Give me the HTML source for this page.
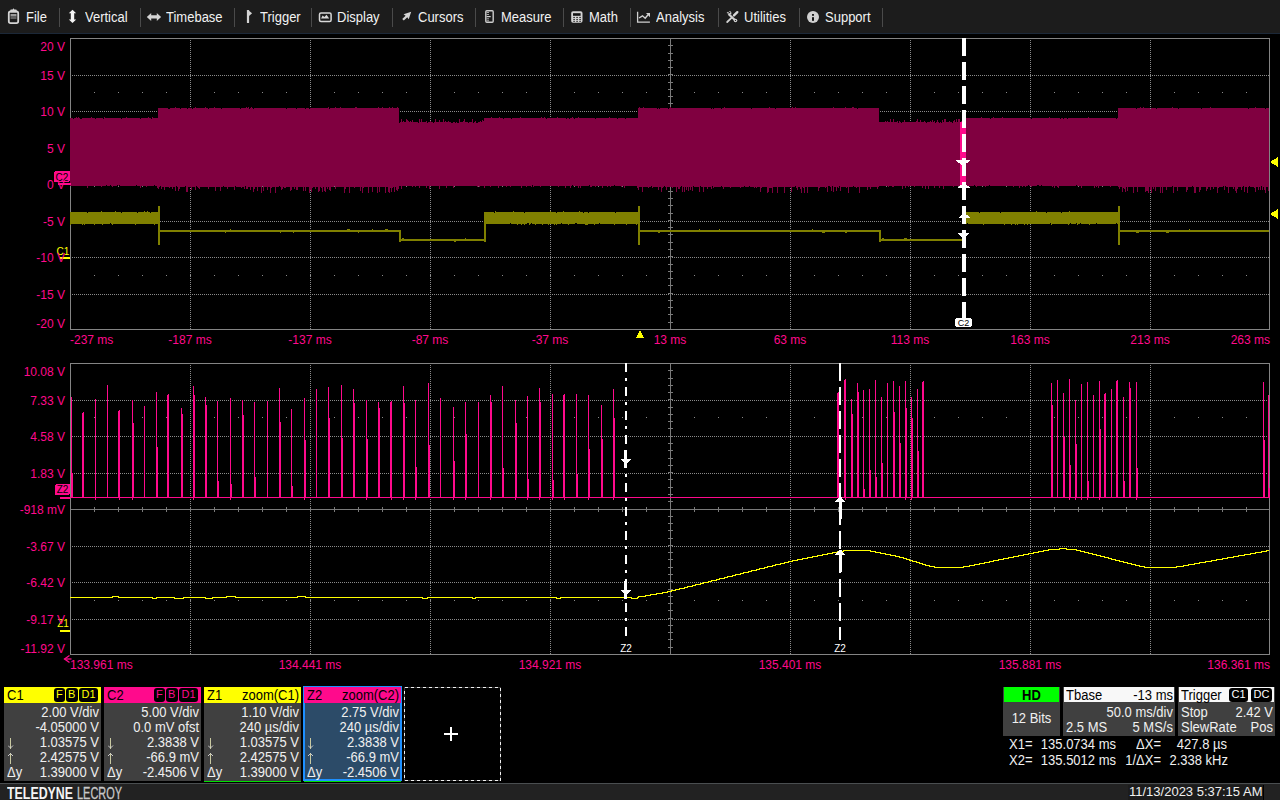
<!DOCTYPE html>
<html><head><meta charset="utf-8"><style>
*{margin:0;padding:0;box-sizing:border-box}
html,body{width:1280px;height:800px;background:#000;overflow:hidden;position:relative;font-family:"Liberation Sans",sans-serif}
#menu{position:absolute;left:0;top:0;width:1280px;height:34px;background:#1c1c1c;border-bottom:1px solid #1c2838}
.mt{position:absolute;top:10px;font-size:13px;line-height:16px;color:#f2f2f2;white-space:nowrap;transform:scaleY(1.11);transform-origin:0 12.5px}
.sep{position:absolute;top:8px;width:1px;height:19px;background:#4a4a4a}
.t{position:absolute;white-space:nowrap;line-height:normal}
.box{position:absolute;overflow:hidden}
.hdr{position:absolute;left:0;top:0;width:97px;height:16px}
.hl{position:absolute;left:3px;top:1px;font-size:13px;line-height:16px;color:#000;transform:scaleY(1.11);transform-origin:0 12.5px}
.hr{position:absolute;right:2px;top:1px;font-size:13px;line-height:16px;color:#000;transform:scaleY(1.11);transform-origin:0 12.5px}
.badge{position:absolute;top:1px;height:14px;background:#000;border-radius:3px;font-size:11px;line-height:13px;text-align:center}
.bl{position:absolute;left:3px;font-size:13px;line-height:15px;color:#f0f0f0;white-space:nowrap;transform:scaleY(1.11);transform-origin:0 12px}
.br{position:absolute;right:2px;font-size:13px;line-height:15px;color:#f0f0f0;white-space:nowrap;transform:scaleY(1.11);transform-origin:0 12px}
#footer{position:absolute;left:0;top:783px;width:1280px;height:17px;background:#222;border-top:1px solid #4a4e50}
#logo{position:absolute;left:7px;top:1.5px;font-size:16px;line-height:16px}
#logo2{position:absolute;left:77px;top:1.5px;font-size:16px;line-height:16px;color:#c8c8c8;transform:scaleX(0.684);transform-origin:left;-webkit-text-stroke:0.3px #c8c8c8}
</style></head><body>
<div id="menu">
<svg style="position:absolute;left:6px;top:7px" width="15" height="19" viewBox="6 7 15 19"><rect x="8.8" y="11.5" width="9.4" height="11.6" rx="1.8" fill="none" stroke="#d4d4d4" stroke-width="1.8"/><path d="M10.3,12.5 L10.3,10.2 Q10.3,9.5 11,9.5 L12.6,9.5 L13.5,8.2 L14.4,9.5 L16,9.5 Q16.7,9.5 16.7,10.2 L16.7,12.5 Z" fill="#d4d4d4"/><rect x="10.5" y="14" width="6" height="2.5" fill="#9a9a9a"/><rect x="10.5" y="16.5" width="6" height="2.5" fill="#606060"/></svg>
<div class="mt" style="left:26px">File</div>
<div class="sep" style="left:59px"></div>
<svg style="position:absolute;left:67px;top:8px" width="11" height="17" viewBox="67 8 11 17"><polygon points="72.5,9.8 76.2,13.2 74.2,13.2 74.2,19.6 76.2,19.6 72.5,23.1 68.8,19.6 70.8,19.6 70.8,13.2 68.8,13.2" fill="#f4f4f4"/></svg>
<div class="mt" style="left:85px">Vertical</div>
<div class="sep" style="left:140px"></div>
<svg style="position:absolute;left:145px;top:11px" width="18" height="12" viewBox="145 11 18 12"><polygon points="146.8,16.9 151.2,12.9 151.2,15.2 156.8,15.2 156.8,12.9 161.1,16.9 156.8,20.9 156.8,18.6 151.2,18.6 151.2,20.9" fill="#d4d4d4"/></svg>
<div class="mt" style="left:166px">Timebase</div>
<div class="sep" style="left:234px"></div>
<svg style="position:absolute;left:245px;top:8px" width="9" height="17" viewBox="245 8 9 17"><rect x="246.9" y="10" width="2.2" height="13" rx="0.5" fill="#d4d4d4"/><polygon points="248,10 252.1,13.2 249,16" fill="#d4d4d4"/></svg>
<div class="mt" style="left:260px">Trigger</div>
<div class="sep" style="left:311px"></div>
<svg style="position:absolute;left:317px;top:11px" width="17" height="13" viewBox="317 11 17 13"><rect x="319.5" y="13" width="11.6" height="8.4" rx="1.5" fill="none" stroke="#d8d8d8" stroke-width="1.5"/><polygon points="321,18.6 322.6,15.6 324.4,17 326.5,14.8 329.2,18.6" fill="#d8d8d8"/></svg>
<div class="mt" style="left:337px">Display</div>
<div class="sep" style="left:392px"></div>
<svg style="position:absolute;left:400px;top:10px" width="13" height="13" viewBox="400 10 13 13"><polygon points="411.2,11.8 408.7,19.2 407.3,17.3 403.8,20.6 402.2,19 405.6,15.8 403.6,14.3" fill="#d4d4d4"/></svg>
<div class="mt" style="left:418px">Cursors</div>
<div class="sep" style="left:475px"></div>
<svg style="position:absolute;left:484px;top:9px" width="11" height="15" viewBox="484 9 11 15"><rect x="485.8" y="10.7" width="7.4" height="11.5" rx="1" fill="none" stroke="#cccccc" stroke-width="1.4"/><rect x="486.5" y="12" width="2.5" height="1" fill="#aaa"/><rect x="486.5" y="14" width="2.5" height="1" fill="#aaa"/><rect x="486.5" y="16" width="4.2" height="1.2" fill="#ccc"/><rect x="486.5" y="18.3" width="2.5" height="1" fill="#aaa"/><rect x="486.5" y="20.3" width="2.5" height="1" fill="#aaa"/></svg>
<div class="mt" style="left:501px">Measure</div>
<div class="sep" style="left:563px"></div>
<svg style="position:absolute;left:570px;top:10px" width="14" height="14" viewBox="570 10 14 14"><rect x="571.2" y="11.2" width="11.3" height="11.6" rx="1.8" fill="#d4d4d4"/><rect x="573" y="13.2" width="7.6" height="2.6" fill="#111"/><g fill="#333"><rect x="573.2" y="16.9" width="1.8" height="1"/><rect x="576.2" y="16.9" width="1.8" height="1"/><rect x="579.2" y="16.9" width="1.8" height="1"/><rect x="573.2" y="18.9" width="1.8" height="1"/><rect x="576.2" y="18.9" width="1.8" height="1"/><rect x="579.2" y="18.9" width="1.8" height="1"/><rect x="573.2" y="20.8" width="1.8" height="1"/><rect x="576.2" y="20.8" width="1.8" height="1"/><rect x="579.2" y="20.8" width="1.8" height="1"/></g></svg>
<div class="mt" style="left:589px">Math</div>
<div class="sep" style="left:630px"></div>
<svg style="position:absolute;left:636px;top:10px" width="16" height="14" viewBox="636 10 16 14"><polyline points="637.6,11.8 637.6,22.2 649.9,22.2" fill="none" stroke="#d0d0d0" stroke-width="1.3"/><polyline points="639,18 642.5,15.8 645.2,18.2 648,14.8" fill="none" stroke="#d0d0d0" stroke-width="1.4"/><polygon points="646,13 650,13 650,17.3" fill="#d0d0d0"/></svg>
<div class="mt" style="left:656px">Analysis</div>
<div class="sep" style="left:718px"></div>
<svg style="position:absolute;left:725px;top:10px" width="14" height="14" viewBox="725 10 14 14"><line x1="728.5" y1="14" x2="736" y2="21" stroke="#d0d0d0" stroke-width="2.2"/><path d="M726.5,13 L728,11.8 L729.5,13.5 L730.5,12.5 L728.8,11 L730.2,11 Q732,12 731.3,14.5 Z" fill="#d0d0d0"/><circle cx="735.5" cy="20.5" r="1.8" fill="#d0d0d0"/><circle cx="735.5" cy="20.5" r="0.6" fill="#111"/><line x1="737.3" y1="12.2" x2="734" y2="15.4" stroke="#d8d8d8" stroke-width="2.4" stroke-linecap="round"/><line x1="732" y1="17.3" x2="727.2" y2="22" stroke="#d0d0d0" stroke-width="1.8" stroke-linecap="round"/></svg>
<div class="mt" style="left:744px">Utilities</div>
<div class="sep" style="left:799px"></div>
<svg style="position:absolute;left:806px;top:10px" width="14" height="14" viewBox="806 10 14 14"><circle cx="813" cy="17" r="6" fill="#d0d0d0"/><rect x="812" y="14" width="2" height="1.8" fill="#1c1c1c"/><rect x="812" y="17.2" width="2" height="3.6" fill="#111"/></svg>
<div class="mt" style="left:825px">Support</div>
<div class="sep" style="left:882px"></div>
</div>
<svg style="position:absolute;left:0;top:0" width="1280" height="800" shape-rendering="crispEdges">
<line x1="70" y1="75.5" x2="1269" y2="75.5" stroke="#8a8a8a" stroke-width="1" stroke-dasharray="1 1"/>
<line x1="70" y1="111.5" x2="1269" y2="111.5" stroke="#8a8a8a" stroke-width="1" stroke-dasharray="1 1"/>
<line x1="70" y1="148.5" x2="1269" y2="148.5" stroke="#8a8a8a" stroke-width="1" stroke-dasharray="1 1"/>
<line x1="70" y1="221.5" x2="1269" y2="221.5" stroke="#8a8a8a" stroke-width="1" stroke-dasharray="1 1"/>
<line x1="70" y1="257.5" x2="1269" y2="257.5" stroke="#8a8a8a" stroke-width="1" stroke-dasharray="1 1"/>
<line x1="70" y1="294.5" x2="1269" y2="294.5" stroke="#8a8a8a" stroke-width="1" stroke-dasharray="1 1"/>
<line x1="190.5" y1="38" x2="190.5" y2="329" stroke="#8a8a8a" stroke-width="1" stroke-dasharray="1 1"/>
<line x1="310.5" y1="38" x2="310.5" y2="329" stroke="#8a8a8a" stroke-width="1" stroke-dasharray="1 1"/>
<line x1="430.5" y1="38" x2="430.5" y2="329" stroke="#8a8a8a" stroke-width="1" stroke-dasharray="1 1"/>
<line x1="550.5" y1="38" x2="550.5" y2="329" stroke="#8a8a8a" stroke-width="1" stroke-dasharray="1 1"/>
<line x1="790.5" y1="38" x2="790.5" y2="329" stroke="#8a8a8a" stroke-width="1" stroke-dasharray="1 1"/>
<line x1="910.5" y1="38" x2="910.5" y2="329" stroke="#8a8a8a" stroke-width="1" stroke-dasharray="1 1"/>
<line x1="1030.5" y1="38" x2="1030.5" y2="329" stroke="#8a8a8a" stroke-width="1" stroke-dasharray="1 1"/>
<line x1="1150.5" y1="38" x2="1150.5" y2="329" stroke="#8a8a8a" stroke-width="1" stroke-dasharray="1 1"/>
<rect x="94" y="92" width="1" height="1" fill="#8a8a8a"/>
<rect x="118" y="92" width="1" height="1" fill="#8a8a8a"/>
<rect x="142" y="92" width="1" height="1" fill="#8a8a8a"/>
<rect x="166" y="92" width="1" height="1" fill="#8a8a8a"/>
<rect x="190" y="92" width="1" height="1" fill="#8a8a8a"/>
<rect x="214" y="92" width="1" height="1" fill="#8a8a8a"/>
<rect x="238" y="92" width="1" height="1" fill="#8a8a8a"/>
<rect x="262" y="92" width="1" height="1" fill="#8a8a8a"/>
<rect x="286" y="92" width="1" height="1" fill="#8a8a8a"/>
<rect x="310" y="92" width="1" height="1" fill="#8a8a8a"/>
<rect x="334" y="92" width="1" height="1" fill="#8a8a8a"/>
<rect x="358" y="92" width="1" height="1" fill="#8a8a8a"/>
<rect x="382" y="92" width="1" height="1" fill="#8a8a8a"/>
<rect x="406" y="92" width="1" height="1" fill="#8a8a8a"/>
<rect x="430" y="92" width="1" height="1" fill="#8a8a8a"/>
<rect x="454" y="92" width="1" height="1" fill="#8a8a8a"/>
<rect x="478" y="92" width="1" height="1" fill="#8a8a8a"/>
<rect x="502" y="92" width="1" height="1" fill="#8a8a8a"/>
<rect x="526" y="92" width="1" height="1" fill="#8a8a8a"/>
<rect x="550" y="92" width="1" height="1" fill="#8a8a8a"/>
<rect x="574" y="92" width="1" height="1" fill="#8a8a8a"/>
<rect x="598" y="92" width="1" height="1" fill="#8a8a8a"/>
<rect x="622" y="92" width="1" height="1" fill="#8a8a8a"/>
<rect x="646" y="92" width="1" height="1" fill="#8a8a8a"/>
<rect x="670" y="92" width="1" height="1" fill="#8a8a8a"/>
<rect x="694" y="92" width="1" height="1" fill="#8a8a8a"/>
<rect x="718" y="92" width="1" height="1" fill="#8a8a8a"/>
<rect x="742" y="92" width="1" height="1" fill="#8a8a8a"/>
<rect x="766" y="92" width="1" height="1" fill="#8a8a8a"/>
<rect x="790" y="92" width="1" height="1" fill="#8a8a8a"/>
<rect x="814" y="92" width="1" height="1" fill="#8a8a8a"/>
<rect x="838" y="92" width="1" height="1" fill="#8a8a8a"/>
<rect x="862" y="92" width="1" height="1" fill="#8a8a8a"/>
<rect x="886" y="92" width="1" height="1" fill="#8a8a8a"/>
<rect x="910" y="92" width="1" height="1" fill="#8a8a8a"/>
<rect x="934" y="92" width="1" height="1" fill="#8a8a8a"/>
<rect x="958" y="92" width="1" height="1" fill="#8a8a8a"/>
<rect x="982" y="92" width="1" height="1" fill="#8a8a8a"/>
<rect x="1006" y="92" width="1" height="1" fill="#8a8a8a"/>
<rect x="1030" y="92" width="1" height="1" fill="#8a8a8a"/>
<rect x="1054" y="92" width="1" height="1" fill="#8a8a8a"/>
<rect x="1078" y="92" width="1" height="1" fill="#8a8a8a"/>
<rect x="1102" y="92" width="1" height="1" fill="#8a8a8a"/>
<rect x="1126" y="92" width="1" height="1" fill="#8a8a8a"/>
<rect x="1150" y="92" width="1" height="1" fill="#8a8a8a"/>
<rect x="1174" y="92" width="1" height="1" fill="#8a8a8a"/>
<rect x="1198" y="92" width="1" height="1" fill="#8a8a8a"/>
<rect x="1222" y="92" width="1" height="1" fill="#8a8a8a"/>
<rect x="1246" y="92" width="1" height="1" fill="#8a8a8a"/>
<rect x="94" y="275" width="1" height="1" fill="#8a8a8a"/>
<rect x="118" y="275" width="1" height="1" fill="#8a8a8a"/>
<rect x="142" y="275" width="1" height="1" fill="#8a8a8a"/>
<rect x="166" y="275" width="1" height="1" fill="#8a8a8a"/>
<rect x="190" y="275" width="1" height="1" fill="#8a8a8a"/>
<rect x="214" y="275" width="1" height="1" fill="#8a8a8a"/>
<rect x="238" y="275" width="1" height="1" fill="#8a8a8a"/>
<rect x="262" y="275" width="1" height="1" fill="#8a8a8a"/>
<rect x="286" y="275" width="1" height="1" fill="#8a8a8a"/>
<rect x="310" y="275" width="1" height="1" fill="#8a8a8a"/>
<rect x="334" y="275" width="1" height="1" fill="#8a8a8a"/>
<rect x="358" y="275" width="1" height="1" fill="#8a8a8a"/>
<rect x="382" y="275" width="1" height="1" fill="#8a8a8a"/>
<rect x="406" y="275" width="1" height="1" fill="#8a8a8a"/>
<rect x="430" y="275" width="1" height="1" fill="#8a8a8a"/>
<rect x="454" y="275" width="1" height="1" fill="#8a8a8a"/>
<rect x="478" y="275" width="1" height="1" fill="#8a8a8a"/>
<rect x="502" y="275" width="1" height="1" fill="#8a8a8a"/>
<rect x="526" y="275" width="1" height="1" fill="#8a8a8a"/>
<rect x="550" y="275" width="1" height="1" fill="#8a8a8a"/>
<rect x="574" y="275" width="1" height="1" fill="#8a8a8a"/>
<rect x="598" y="275" width="1" height="1" fill="#8a8a8a"/>
<rect x="622" y="275" width="1" height="1" fill="#8a8a8a"/>
<rect x="646" y="275" width="1" height="1" fill="#8a8a8a"/>
<rect x="670" y="275" width="1" height="1" fill="#8a8a8a"/>
<rect x="694" y="275" width="1" height="1" fill="#8a8a8a"/>
<rect x="718" y="275" width="1" height="1" fill="#8a8a8a"/>
<rect x="742" y="275" width="1" height="1" fill="#8a8a8a"/>
<rect x="766" y="275" width="1" height="1" fill="#8a8a8a"/>
<rect x="790" y="275" width="1" height="1" fill="#8a8a8a"/>
<rect x="814" y="275" width="1" height="1" fill="#8a8a8a"/>
<rect x="838" y="275" width="1" height="1" fill="#8a8a8a"/>
<rect x="862" y="275" width="1" height="1" fill="#8a8a8a"/>
<rect x="886" y="275" width="1" height="1" fill="#8a8a8a"/>
<rect x="910" y="275" width="1" height="1" fill="#8a8a8a"/>
<rect x="934" y="275" width="1" height="1" fill="#8a8a8a"/>
<rect x="958" y="275" width="1" height="1" fill="#8a8a8a"/>
<rect x="982" y="275" width="1" height="1" fill="#8a8a8a"/>
<rect x="1006" y="275" width="1" height="1" fill="#8a8a8a"/>
<rect x="1030" y="275" width="1" height="1" fill="#8a8a8a"/>
<rect x="1054" y="275" width="1" height="1" fill="#8a8a8a"/>
<rect x="1078" y="275" width="1" height="1" fill="#8a8a8a"/>
<rect x="1102" y="275" width="1" height="1" fill="#8a8a8a"/>
<rect x="1126" y="275" width="1" height="1" fill="#8a8a8a"/>
<rect x="1150" y="275" width="1" height="1" fill="#8a8a8a"/>
<rect x="1174" y="275" width="1" height="1" fill="#8a8a8a"/>
<rect x="1198" y="275" width="1" height="1" fill="#8a8a8a"/>
<rect x="1222" y="275" width="1" height="1" fill="#8a8a8a"/>
<rect x="1246" y="275" width="1" height="1" fill="#8a8a8a"/>
<rect x="670" y="38" width="1" height="291" fill="#7a7a7a"/>
<rect x="668" y="45" width="5" height="1" fill="#7a7a7a"/>
<rect x="668" y="53" width="5" height="1" fill="#7a7a7a"/>
<rect x="668" y="60" width="5" height="1" fill="#7a7a7a"/>
<rect x="668" y="67" width="5" height="1" fill="#7a7a7a"/>
<rect x="668" y="74" width="5" height="1" fill="#7a7a7a"/>
<rect x="668" y="82" width="5" height="1" fill="#7a7a7a"/>
<rect x="668" y="89" width="5" height="1" fill="#7a7a7a"/>
<rect x="668" y="96" width="5" height="1" fill="#7a7a7a"/>
<rect x="668" y="103" width="5" height="1" fill="#7a7a7a"/>
<rect x="668" y="111" width="5" height="1" fill="#7a7a7a"/>
<rect x="668" y="118" width="5" height="1" fill="#7a7a7a"/>
<rect x="668" y="125" width="5" height="1" fill="#7a7a7a"/>
<rect x="668" y="133" width="5" height="1" fill="#7a7a7a"/>
<rect x="668" y="140" width="5" height="1" fill="#7a7a7a"/>
<rect x="668" y="147" width="5" height="1" fill="#7a7a7a"/>
<rect x="668" y="154" width="5" height="1" fill="#7a7a7a"/>
<rect x="668" y="162" width="5" height="1" fill="#7a7a7a"/>
<rect x="668" y="169" width="5" height="1" fill="#7a7a7a"/>
<rect x="668" y="176" width="5" height="1" fill="#7a7a7a"/>
<rect x="668" y="184" width="5" height="1" fill="#7a7a7a"/>
<rect x="668" y="191" width="5" height="1" fill="#7a7a7a"/>
<rect x="668" y="198" width="5" height="1" fill="#7a7a7a"/>
<rect x="668" y="205" width="5" height="1" fill="#7a7a7a"/>
<rect x="668" y="213" width="5" height="1" fill="#7a7a7a"/>
<rect x="668" y="220" width="5" height="1" fill="#7a7a7a"/>
<rect x="668" y="227" width="5" height="1" fill="#7a7a7a"/>
<rect x="668" y="234" width="5" height="1" fill="#7a7a7a"/>
<rect x="668" y="242" width="5" height="1" fill="#7a7a7a"/>
<rect x="668" y="249" width="5" height="1" fill="#7a7a7a"/>
<rect x="668" y="256" width="5" height="1" fill="#7a7a7a"/>
<rect x="668" y="264" width="5" height="1" fill="#7a7a7a"/>
<rect x="668" y="271" width="5" height="1" fill="#7a7a7a"/>
<rect x="668" y="278" width="5" height="1" fill="#7a7a7a"/>
<rect x="668" y="285" width="5" height="1" fill="#7a7a7a"/>
<rect x="668" y="293" width="5" height="1" fill="#7a7a7a"/>
<rect x="668" y="300" width="5" height="1" fill="#7a7a7a"/>
<rect x="668" y="307" width="5" height="1" fill="#7a7a7a"/>
<rect x="668" y="314" width="5" height="1" fill="#7a7a7a"/>
<rect x="668" y="322" width="5" height="1" fill="#7a7a7a"/>
<rect x="70" y="184" width="1200" height="1" fill="#7a7a7a"/>
<rect x="94" y="182" width="1" height="5" fill="#7a7a7a"/>
<rect x="118" y="182" width="1" height="5" fill="#7a7a7a"/>
<rect x="142" y="182" width="1" height="5" fill="#7a7a7a"/>
<rect x="166" y="182" width="1" height="5" fill="#7a7a7a"/>
<rect x="190" y="182" width="1" height="5" fill="#7a7a7a"/>
<rect x="214" y="182" width="1" height="5" fill="#7a7a7a"/>
<rect x="238" y="182" width="1" height="5" fill="#7a7a7a"/>
<rect x="262" y="182" width="1" height="5" fill="#7a7a7a"/>
<rect x="286" y="182" width="1" height="5" fill="#7a7a7a"/>
<rect x="310" y="182" width="1" height="5" fill="#7a7a7a"/>
<rect x="334" y="182" width="1" height="5" fill="#7a7a7a"/>
<rect x="358" y="182" width="1" height="5" fill="#7a7a7a"/>
<rect x="382" y="182" width="1" height="5" fill="#7a7a7a"/>
<rect x="406" y="182" width="1" height="5" fill="#7a7a7a"/>
<rect x="430" y="182" width="1" height="5" fill="#7a7a7a"/>
<rect x="454" y="182" width="1" height="5" fill="#7a7a7a"/>
<rect x="478" y="182" width="1" height="5" fill="#7a7a7a"/>
<rect x="502" y="182" width="1" height="5" fill="#7a7a7a"/>
<rect x="526" y="182" width="1" height="5" fill="#7a7a7a"/>
<rect x="550" y="182" width="1" height="5" fill="#7a7a7a"/>
<rect x="574" y="182" width="1" height="5" fill="#7a7a7a"/>
<rect x="598" y="182" width="1" height="5" fill="#7a7a7a"/>
<rect x="622" y="182" width="1" height="5" fill="#7a7a7a"/>
<rect x="646" y="182" width="1" height="5" fill="#7a7a7a"/>
<rect x="670" y="182" width="1" height="5" fill="#7a7a7a"/>
<rect x="694" y="182" width="1" height="5" fill="#7a7a7a"/>
<rect x="718" y="182" width="1" height="5" fill="#7a7a7a"/>
<rect x="742" y="182" width="1" height="5" fill="#7a7a7a"/>
<rect x="766" y="182" width="1" height="5" fill="#7a7a7a"/>
<rect x="790" y="182" width="1" height="5" fill="#7a7a7a"/>
<rect x="814" y="182" width="1" height="5" fill="#7a7a7a"/>
<rect x="838" y="182" width="1" height="5" fill="#7a7a7a"/>
<rect x="862" y="182" width="1" height="5" fill="#7a7a7a"/>
<rect x="886" y="182" width="1" height="5" fill="#7a7a7a"/>
<rect x="910" y="182" width="1" height="5" fill="#7a7a7a"/>
<rect x="934" y="182" width="1" height="5" fill="#7a7a7a"/>
<rect x="958" y="182" width="1" height="5" fill="#7a7a7a"/>
<rect x="982" y="182" width="1" height="5" fill="#7a7a7a"/>
<rect x="1006" y="182" width="1" height="5" fill="#7a7a7a"/>
<rect x="1030" y="182" width="1" height="5" fill="#7a7a7a"/>
<rect x="1054" y="182" width="1" height="5" fill="#7a7a7a"/>
<rect x="1078" y="182" width="1" height="5" fill="#7a7a7a"/>
<rect x="1102" y="182" width="1" height="5" fill="#7a7a7a"/>
<rect x="1126" y="182" width="1" height="5" fill="#7a7a7a"/>
<rect x="1150" y="182" width="1" height="5" fill="#7a7a7a"/>
<rect x="1174" y="182" width="1" height="5" fill="#7a7a7a"/>
<rect x="1198" y="182" width="1" height="5" fill="#7a7a7a"/>
<rect x="1222" y="182" width="1" height="5" fill="#7a7a7a"/>
<rect x="1246" y="182" width="1" height="5" fill="#7a7a7a"/>
<rect x="70.5" y="38.5" width="1199" height="291" fill="none" stroke="#848484" stroke-width="1"/>
<polygon points="70,118 71,118 71,118 72,118 72,118 73,118 73,119 74,119 74,118 75,118 75,118 76,118 76,117 77,117 77,118 78,118 78,117 79,117 79,118 80,118 80,119 81,119 81,119 82,119 82,118 83,118 83,118 84,118 84,118 85,118 85,118 86,118 86,118 87,118 87,118 88,118 88,118 89,118 89,118 90,118 90,118 91,118 91,117 92,117 92,118 93,118 93,118 94,118 94,118 95,118 95,119 96,119 96,118 97,118 97,118 98,118 98,118 99,118 99,118 100,118 100,118 101,118 101,118 102,118 102,118 103,118 103,119 104,119 104,117 105,117 105,118 106,118 106,118 107,118 107,118 108,118 108,118 109,118 109,118 110,118 110,118 111,118 111,118 112,118 112,118 113,118 113,118 114,118 114,118 115,118 115,118 116,118 116,118 117,118 117,118 118,118 118,118 119,118 119,118 120,118 120,118 121,118 121,119 122,119 122,118 123,118 123,118 124,118 124,118 125,118 125,118 126,118 126,117 127,117 127,118 128,118 128,118 129,118 129,118 130,118 130,118 131,118 131,118 132,118 132,118 133,118 133,118 134,118 134,118 135,118 135,118 136,118 136,118 137,118 137,118 138,118 138,118 139,118 139,118 140,118 140,119 141,119 141,118 142,118 142,118 143,118 143,118 144,118 144,118 145,118 145,118 146,118 146,118 147,118 147,118 148,118 148,117 149,117 149,118 150,118 150,118 151,118 151,119 152,119 152,117 153,117 153,118 154,118 154,118 155,118 155,118 156,118 156,118 157,118 157,118 158,118 158,188 157,188 157,186 156,186 156,186 155,186 155,185 154,185 154,186 153,186 153,186 152,186 152,186 151,186 151,186 150,186 150,186 149,186 149,186 148,186 148,186 147,186 147,187 146,187 146,186 145,186 145,186 144,186 144,186 143,186 143,186 142,186 142,186 141,186 141,188 140,188 140,186 139,186 139,186 138,186 138,186 137,186 137,185 136,185 136,186 135,186 135,186 134,186 134,186 133,186 133,186 132,186 132,186 131,186 131,186 130,186 130,186 129,186 129,186 128,186 128,186 127,186 127,186 126,186 126,186 125,186 125,186 124,186 124,186 123,186 123,186 122,186 122,186 121,186 121,186 120,186 120,185 119,185 119,186 118,186 118,185 117,185 117,186 116,186 116,186 115,186 115,186 114,186 114,186 113,186 113,187 112,187 112,186 111,186 111,185 110,185 110,186 109,186 109,186 108,186 108,186 107,186 107,185 106,185 106,186 105,186 105,186 104,186 104,186 103,186 103,186 102,186 102,187 101,187 101,186 100,186 100,186 99,186 99,186 98,186 98,186 97,186 97,186 96,186 96,186 95,186 95,186 94,186 94,186 93,186 93,186 92,186 92,186 91,186 91,186 90,186 90,186 89,186 89,186 88,186 88,188 87,188 87,186 86,186 86,186 85,186 85,186 84,186 84,186 83,186 83,186 82,186 82,186 81,186 81,186 80,186 80,186 79,186 79,186 78,186 78,186 77,186 77,186 76,186 76,186 75,186 75,186 74,186 74,186 73,186 73,186 72,186 72,186 71,186 71,186 70,186" fill="#800040"/>
<polygon points="158,108 159,108 159,108 160,108 160,108 161,108 161,108 162,108 162,108 163,108 163,108 164,108 164,108 165,108 165,108 166,108 166,108 167,108 167,108 168,108 168,109 169,109 169,109 170,109 170,108 171,108 171,108 172,108 172,108 173,108 173,108 174,108 174,108 175,108 175,107 176,107 176,108 177,108 177,108 178,108 178,108 179,108 179,108 180,108 180,109 181,109 181,108 182,108 182,108 183,108 183,108 184,108 184,108 185,108 185,108 186,108 186,108 187,108 187,109 188,109 188,108 189,108 189,108 190,108 190,108 191,108 191,108 192,108 192,109 193,109 193,108 194,108 194,108 195,108 195,107 196,107 196,108 197,108 197,108 198,108 198,108 199,108 199,108 200,108 200,108 201,108 201,108 202,108 202,108 203,108 203,108 204,108 204,108 205,108 205,107 206,107 206,108 207,108 207,108 208,108 208,109 209,109 209,108 210,108 210,108 211,108 211,108 212,108 212,108 213,108 213,108 214,108 214,107 215,107 215,108 216,108 216,108 217,108 217,108 218,108 218,108 219,108 219,108 220,108 220,108 221,108 221,109 222,109 222,108 223,108 223,108 224,108 224,108 225,108 225,108 226,108 226,108 227,108 227,108 228,108 228,108 229,108 229,108 230,108 230,108 231,108 231,108 232,108 232,108 233,108 233,108 234,108 234,108 235,108 235,108 236,108 236,108 237,108 237,108 238,108 238,108 239,108 239,108 240,108 240,109 241,109 241,108 242,108 242,108 243,108 243,108 244,108 244,108 245,108 245,108 246,108 246,107 247,107 247,108 248,108 248,107 249,107 249,109 250,109 250,108 251,108 251,107 252,107 252,108 253,108 253,109 254,109 254,108 255,108 255,108 256,108 256,108 257,108 257,108 258,108 258,108 259,108 259,108 260,108 260,108 261,108 261,108 262,108 262,108 263,108 263,108 264,108 264,108 265,108 265,108 266,108 266,108 267,108 267,108 268,108 268,108 269,108 269,108 270,108 270,108 271,108 271,108 272,108 272,108 273,108 273,108 274,108 274,108 275,108 275,108 276,108 276,108 277,108 277,108 278,108 278,108 279,108 279,108 280,108 280,108 281,108 281,108 282,108 282,108 283,108 283,108 284,108 284,108 285,108 285,108 286,108 286,109 287,109 287,108 288,108 288,108 289,108 289,108 290,108 290,108 291,108 291,108 292,108 292,108 293,108 293,108 294,108 294,108 295,108 295,108 296,108 296,109 297,109 297,108 298,108 298,108 299,108 299,108 300,108 300,108 301,108 301,108 302,108 302,108 303,108 303,108 304,108 304,108 305,108 305,109 306,109 306,108 307,108 307,108 308,108 308,108 309,108 309,109 310,109 310,108 311,108 311,108 312,108 312,108 313,108 313,108 314,108 314,108 315,108 315,108 316,108 316,108 317,108 317,108 318,108 318,108 319,108 319,108 320,108 320,108 321,108 321,108 322,108 322,108 323,108 323,108 324,108 324,108 325,108 325,108 326,108 326,108 327,108 327,108 328,108 328,107 329,107 329,109 330,109 330,108 331,108 331,108 332,108 332,108 333,108 333,108 334,108 334,108 335,108 335,107 336,107 336,108 337,108 337,108 338,108 338,108 339,108 339,108 340,108 340,107 341,107 341,108 342,108 342,108 343,108 343,108 344,108 344,108 345,108 345,108 346,108 346,108 347,108 347,108 348,108 348,108 349,108 349,108 350,108 350,108 351,108 351,108 352,108 352,108 353,108 353,108 354,108 354,108 355,108 355,107 356,107 356,107 357,107 357,108 358,108 358,108 359,108 359,108 360,108 360,108 361,108 361,108 362,108 362,108 363,108 363,108 364,108 364,108 365,108 365,108 366,108 366,108 367,108 367,108 368,108 368,108 369,108 369,108 370,108 370,108 371,108 371,108 372,108 372,108 373,108 373,108 374,108 374,108 375,108 375,108 376,108 376,108 377,108 377,108 378,108 378,107 379,107 379,108 380,108 380,108 381,108 381,108 382,108 382,107 383,107 383,108 384,108 384,108 385,108 385,108 386,108 386,108 387,108 387,108 388,108 388,108 389,108 389,107 390,107 390,108 391,108 391,108 392,108 392,107 393,107 393,108 394,108 394,108 395,108 395,108 396,108 396,108 397,108 397,107 398,107 398,108 399,108 399,189 398,189 398,191 397,191 397,190 396,190 396,187 395,187 395,192 394,192 394,187 393,187 393,188 392,188 392,192 391,192 391,188 390,188 390,193 389,193 389,192 388,192 388,187 387,187 387,187 386,187 386,193 385,193 385,187 384,187 384,187 383,187 383,187 382,187 382,187 381,187 381,187 380,187 380,192 379,192 379,187 378,187 378,193 377,193 377,187 376,187 376,187 375,187 375,187 374,187 374,187 373,187 373,192 372,192 372,187 371,187 371,187 370,187 370,187 369,187 369,193 368,193 368,187 367,187 367,187 366,187 366,187 365,187 365,187 364,187 364,188 363,188 363,193 362,193 362,187 361,187 361,191 360,191 360,187 359,187 359,187 358,187 358,187 357,187 357,187 356,187 356,187 355,187 355,188 354,188 354,187 353,187 353,187 352,187 352,187 351,187 351,187 350,187 350,193 349,193 349,187 348,187 348,187 347,187 347,187 346,187 346,189 345,189 345,193 344,193 344,187 343,187 343,187 342,187 342,187 341,187 341,187 340,187 340,187 339,187 339,187 338,187 338,187 337,187 337,187 336,187 336,189 335,189 335,186 334,186 334,187 333,187 333,187 332,187 332,187 331,187 331,191 330,191 330,190 329,190 329,187 328,187 328,189 327,189 327,187 326,187 326,192 325,192 325,191 324,191 324,187 323,187 323,192 322,192 322,188 321,188 321,187 320,187 320,191 319,191 319,192 318,192 318,187 317,187 317,187 316,187 316,189 315,189 315,187 314,187 314,187 313,187 313,188 312,188 312,192 311,192 311,190 310,190 310,193 309,193 309,187 308,187 308,187 307,187 307,187 306,187 306,191 305,191 305,187 304,187 304,191 303,191 303,187 302,187 302,187 301,187 301,187 300,187 300,187 299,187 299,187 298,187 298,190 297,190 297,190 296,190 296,187 295,187 295,189 294,189 294,187 293,187 293,187 292,187 292,190 291,190 291,191 290,191 290,187 289,187 289,187 288,187 288,187 287,187 287,187 286,187 286,188 285,188 285,188 284,188 284,187 283,187 283,189 282,189 282,190 281,190 281,187 280,187 280,186 279,186 279,187 278,187 278,187 277,187 277,187 276,187 276,193 275,193 275,187 274,187 274,187 273,187 273,187 272,187 272,188 271,188 271,193 270,193 270,187 269,187 269,187 268,187 268,190 267,190 267,187 266,187 266,187 265,187 265,187 264,187 264,191 263,191 263,186 262,186 262,193 261,193 261,187 260,187 260,187 259,187 259,187 258,187 258,191 257,191 257,187 256,187 256,187 255,187 255,189 254,189 254,192 253,192 253,187 252,187 252,187 251,187 251,190 250,190 250,187 249,187 249,187 248,187 248,189 247,189 247,189 246,189 246,186 245,186 245,189 244,189 244,187 243,187 243,187 242,187 242,188 241,188 241,187 240,187 240,187 239,187 239,187 238,187 238,187 237,187 237,187 236,187 236,186 235,186 235,190 234,190 234,187 233,187 233,187 232,187 232,187 231,187 231,187 230,187 230,187 229,187 229,187 228,187 228,189 227,189 227,187 226,187 226,187 225,187 225,187 224,187 224,186 223,186 223,187 222,187 222,187 221,187 221,191 220,191 220,187 219,187 219,187 218,187 218,187 217,187 217,187 216,187 216,191 215,191 215,187 214,187 214,187 213,187 213,187 212,187 212,187 211,187 211,187 210,187 210,187 209,187 209,189 208,189 208,187 207,187 207,187 206,187 206,187 205,187 205,187 204,187 204,187 203,187 203,187 202,187 202,187 201,187 201,187 200,187 200,189 199,189 199,188 198,188 198,187 197,187 197,186 196,186 196,190 195,190 195,187 194,187 194,187 193,187 193,187 192,187 192,190 191,190 191,187 190,187 190,187 189,187 189,187 188,187 188,192 187,192 187,192 186,192 186,186 185,186 185,187 184,187 184,187 183,187 183,187 182,187 182,187 181,187 181,187 180,187 180,189 179,189 179,191 178,191 178,187 177,187 177,186 176,186 176,191 175,191 175,187 174,187 174,187 173,187 173,189 172,189 172,187 171,187 171,187 170,187 170,188 169,188 169,187 168,187 168,187 167,187 167,187 166,187 166,187 165,187 165,190 164,190 164,187 163,187 163,187 162,187 162,189 161,189 161,186 160,186 160,187 159,187 159,189 158,189" fill="#800040"/>
<polygon points="399,123 400,123 400,122 401,122 401,119 402,119 402,122 403,122 403,121 404,121 404,122 405,122 405,122 406,122 406,119 407,119 407,120 408,120 408,121 409,121 409,122 410,122 410,121 411,121 411,122 412,122 412,120 413,120 413,122 414,122 414,122 415,122 415,122 416,122 416,122 417,122 417,122 418,122 418,123 419,123 419,119 420,119 420,122 421,122 421,119 422,119 422,122 423,122 423,122 424,122 424,122 425,122 425,122 426,122 426,121 427,121 427,123 428,123 428,122 429,122 429,122 430,122 430,121 431,121 431,122 432,122 432,122 433,122 433,123 434,123 434,122 435,122 435,119 436,119 436,122 437,122 437,122 438,122 438,122 439,122 439,120 440,120 440,122 441,122 441,122 442,122 442,122 443,122 443,119 444,119 444,122 445,122 445,121 446,121 446,122 447,122 447,122 448,122 448,121 449,121 449,122 450,122 450,122 451,122 451,123 452,123 452,123 453,123 453,122 454,122 454,122 455,122 455,123 456,123 456,122 457,122 457,123 458,123 458,123 459,123 459,119 460,119 460,122 461,122 461,122 462,122 462,122 463,122 463,121 464,121 464,119 465,119 465,122 466,122 466,122 467,122 467,122 468,122 468,123 469,123 469,122 470,122 470,122 471,122 471,122 472,122 472,119 473,119 473,123 474,123 474,122 475,122 475,121 476,121 476,123 477,123 477,123 478,123 478,122 479,122 479,122 480,122 480,121 481,121 481,122 482,122 482,120 483,120 483,121 484,121 484,186 483,186 483,186 482,186 482,186 481,186 481,186 480,186 480,187 479,187 479,186 478,186 478,187 477,187 477,186 476,186 476,186 475,186 475,186 474,186 474,186 473,186 473,186 472,186 472,186 471,186 471,186 470,186 470,186 469,186 469,186 468,186 468,186 467,186 467,186 466,186 466,186 465,186 465,186 464,186 464,186 463,186 463,186 462,186 462,186 461,186 461,186 460,186 460,186 459,186 459,186 458,186 458,186 457,186 457,186 456,186 456,186 455,186 455,186 454,186 454,188 453,188 453,186 452,186 452,186 451,186 451,186 450,186 450,186 449,186 449,186 448,186 448,186 447,186 447,188 446,188 446,186 445,186 445,186 444,186 444,186 443,186 443,186 442,186 442,186 441,186 441,186 440,186 440,189 439,189 439,186 438,186 438,186 437,186 437,186 436,186 436,186 435,186 435,186 434,186 434,186 433,186 433,186 432,186 432,186 431,186 431,186 430,186 430,189 429,189 429,186 428,186 428,186 427,186 427,188 426,188 426,186 425,186 425,186 424,186 424,186 423,186 423,186 422,186 422,186 421,186 421,186 420,186 420,188 419,188 419,186 418,186 418,186 417,186 417,186 416,186 416,187 415,187 415,186 414,186 414,186 413,186 413,187 412,187 412,186 411,186 411,186 410,186 410,186 409,186 409,186 408,186 408,186 407,186 407,186 406,186 406,186 405,186 405,186 404,186 404,186 403,186 403,186 402,186 402,189 401,189 401,186 400,186 400,186 399,186" fill="#800040"/>
<polygon points="484,118 485,118 485,118 486,118 486,118 487,118 487,118 488,118 488,118 489,118 489,118 490,118 490,118 491,118 491,117 492,117 492,118 493,118 493,118 494,118 494,118 495,118 495,118 496,118 496,118 497,118 497,118 498,118 498,118 499,118 499,117 500,117 500,118 501,118 501,118 502,118 502,118 503,118 503,119 504,119 504,118 505,118 505,118 506,118 506,118 507,118 507,118 508,118 508,118 509,118 509,118 510,118 510,118 511,118 511,119 512,119 512,118 513,118 513,118 514,118 514,118 515,118 515,118 516,118 516,118 517,118 517,118 518,118 518,118 519,118 519,118 520,118 520,117 521,117 521,118 522,118 522,118 523,118 523,118 524,118 524,118 525,118 525,118 526,118 526,118 527,118 527,118 528,118 528,118 529,118 529,118 530,118 530,118 531,118 531,118 532,118 532,118 533,118 533,118 534,118 534,118 535,118 535,118 536,118 536,118 537,118 537,118 538,118 538,118 539,118 539,118 540,118 540,118 541,118 541,117 542,117 542,118 543,118 543,118 544,118 544,117 545,117 545,118 546,118 546,119 547,119 547,118 548,118 548,118 549,118 549,118 550,118 550,118 551,118 551,118 552,118 552,118 553,118 553,118 554,118 554,118 555,118 555,118 556,118 556,118 557,118 557,117 558,117 558,118 559,118 559,118 560,118 560,118 561,118 561,118 562,118 562,118 563,118 563,118 564,118 564,118 565,118 565,118 566,118 566,119 567,119 567,118 568,118 568,118 569,118 569,119 570,119 570,118 571,118 571,118 572,118 572,117 573,117 573,118 574,118 574,119 575,119 575,118 576,118 576,118 577,118 577,118 578,118 578,117 579,117 579,118 580,118 580,118 581,118 581,118 582,118 582,118 583,118 583,118 584,118 584,118 585,118 585,118 586,118 586,118 587,118 587,118 588,118 588,118 589,118 589,118 590,118 590,118 591,118 591,118 592,118 592,118 593,118 593,118 594,118 594,118 595,118 595,119 596,119 596,118 597,118 597,118 598,118 598,118 599,118 599,118 600,118 600,118 601,118 601,118 602,118 602,118 603,118 603,118 604,118 604,118 605,118 605,118 606,118 606,118 607,118 607,118 608,118 608,118 609,118 609,117 610,117 610,118 611,118 611,118 612,118 612,118 613,118 613,118 614,118 614,118 615,118 615,118 616,118 616,118 617,118 617,119 618,119 618,118 619,118 619,118 620,118 620,118 621,118 621,118 622,118 622,118 623,118 623,118 624,118 624,118 625,118 625,119 626,119 626,118 627,118 627,118 628,118 628,118 629,118 629,118 630,118 630,118 631,118 631,118 632,118 632,118 633,118 633,118 634,118 634,118 635,118 635,118 636,118 636,118 637,118 637,118 638,118 638,188 637,188 637,186 636,186 636,186 635,186 635,186 634,186 634,186 633,186 633,186 632,186 632,186 631,186 631,186 630,186 630,186 629,186 629,186 628,186 628,186 627,186 627,186 626,186 626,186 625,186 625,188 624,188 624,186 623,186 623,186 622,186 622,187 621,187 621,186 620,186 620,186 619,186 619,186 618,186 618,186 617,186 617,186 616,186 616,186 615,186 615,185 614,185 614,186 613,186 613,186 612,186 612,186 611,186 611,187 610,187 610,186 609,186 609,186 608,186 608,187 607,187 607,186 606,186 606,186 605,186 605,186 604,186 604,186 603,186 603,188 602,188 602,186 601,186 601,186 600,186 600,186 599,186 599,186 598,186 598,186 597,186 597,186 596,186 596,187 595,187 595,186 594,186 594,186 593,186 593,186 592,186 592,187 591,187 591,187 590,187 590,185 589,185 589,186 588,186 588,186 587,186 587,186 586,186 586,186 585,186 585,186 584,186 584,186 583,186 583,186 582,186 582,186 581,186 581,188 580,188 580,186 579,186 579,188 578,188 578,186 577,186 577,186 576,186 576,186 575,186 575,186 574,186 574,186 573,186 573,185 572,185 572,186 571,186 571,188 570,188 570,186 569,186 569,186 568,186 568,186 567,186 567,186 566,186 566,188 565,188 565,186 564,186 564,186 563,186 563,186 562,186 562,186 561,186 561,186 560,186 560,186 559,186 559,187 558,187 558,186 557,186 557,186 556,186 556,186 555,186 555,186 554,186 554,186 553,186 553,186 552,186 552,186 551,186 551,186 550,186 550,186 549,186 549,186 548,186 548,186 547,186 547,186 546,186 546,186 545,186 545,186 544,186 544,186 543,186 543,186 542,186 542,186 541,186 541,187 540,187 540,186 539,186 539,186 538,186 538,186 537,186 537,186 536,186 536,186 535,186 535,186 534,186 534,187 533,187 533,185 532,185 532,187 531,187 531,186 530,186 530,186 529,186 529,186 528,186 528,186 527,186 527,187 526,187 526,186 525,186 525,186 524,186 524,186 523,186 523,186 522,186 522,188 521,188 521,186 520,186 520,186 519,186 519,186 518,186 518,186 517,186 517,186 516,186 516,186 515,186 515,186 514,186 514,186 513,186 513,186 512,186 512,186 511,186 511,187 510,187 510,186 509,186 509,186 508,186 508,186 507,186 507,187 506,187 506,186 505,186 505,186 504,186 504,186 503,186 503,186 502,186 502,186 501,186 501,186 500,186 500,186 499,186 499,188 498,188 498,186 497,186 497,186 496,186 496,186 495,186 495,186 494,186 494,186 493,186 493,186 492,186 492,186 491,186 491,187 490,187 490,186 489,186 489,186 488,186 488,186 487,186 487,186 486,186 486,186 485,186 485,188 484,188" fill="#800040"/>
<polygon points="638,108 639,108 639,107 640,107 640,108 641,108 641,108 642,108 642,108 643,108 643,107 644,107 644,108 645,108 645,108 646,108 646,108 647,108 647,108 648,108 648,108 649,108 649,108 650,108 650,108 651,108 651,108 652,108 652,108 653,108 653,108 654,108 654,108 655,108 655,108 656,108 656,108 657,108 657,109 658,109 658,108 659,108 659,109 660,109 660,108 661,108 661,108 662,108 662,108 663,108 663,108 664,108 664,108 665,108 665,108 666,108 666,108 667,108 667,108 668,108 668,109 669,109 669,108 670,108 670,107 671,107 671,108 672,108 672,108 673,108 673,108 674,108 674,108 675,108 675,108 676,108 676,108 677,108 677,108 678,108 678,108 679,108 679,108 680,108 680,108 681,108 681,108 682,108 682,108 683,108 683,108 684,108 684,108 685,108 685,108 686,108 686,108 687,108 687,108 688,108 688,108 689,108 689,108 690,108 690,108 691,108 691,108 692,108 692,108 693,108 693,108 694,108 694,108 695,108 695,108 696,108 696,108 697,108 697,108 698,108 698,108 699,108 699,108 700,108 700,108 701,108 701,108 702,108 702,108 703,108 703,108 704,108 704,108 705,108 705,108 706,108 706,108 707,108 707,108 708,108 708,108 709,108 709,108 710,108 710,108 711,108 711,109 712,109 712,108 713,108 713,109 714,109 714,108 715,108 715,108 716,108 716,108 717,108 717,108 718,108 718,108 719,108 719,108 720,108 720,108 721,108 721,109 722,109 722,108 723,108 723,108 724,108 724,107 725,107 725,108 726,108 726,108 727,108 727,108 728,108 728,108 729,108 729,108 730,108 730,108 731,108 731,108 732,108 732,108 733,108 733,108 734,108 734,108 735,108 735,108 736,108 736,108 737,108 737,108 738,108 738,108 739,108 739,108 740,108 740,108 741,108 741,108 742,108 742,108 743,108 743,108 744,108 744,108 745,108 745,108 746,108 746,108 747,108 747,108 748,108 748,108 749,108 749,108 750,108 750,108 751,108 751,109 752,109 752,108 753,108 753,108 754,108 754,108 755,108 755,108 756,108 756,108 757,108 757,108 758,108 758,108 759,108 759,108 760,108 760,108 761,108 761,108 762,108 762,108 763,108 763,108 764,108 764,108 765,108 765,108 766,108 766,108 767,108 767,108 768,108 768,108 769,108 769,107 770,107 770,108 771,108 771,108 772,108 772,108 773,108 773,108 774,108 774,108 775,108 775,109 776,109 776,108 777,108 777,108 778,108 778,108 779,108 779,108 780,108 780,108 781,108 781,108 782,108 782,108 783,108 783,108 784,108 784,108 785,108 785,108 786,108 786,108 787,108 787,108 788,108 788,108 789,108 789,108 790,108 790,108 791,108 791,108 792,108 792,107 793,107 793,108 794,108 794,108 795,108 795,107 796,107 796,108 797,108 797,108 798,108 798,108 799,108 799,108 800,108 800,108 801,108 801,108 802,108 802,108 803,108 803,108 804,108 804,108 805,108 805,108 806,108 806,108 807,108 807,108 808,108 808,108 809,108 809,108 810,108 810,108 811,108 811,108 812,108 812,108 813,108 813,108 814,108 814,108 815,108 815,108 816,108 816,108 817,108 817,108 818,108 818,108 819,108 819,108 820,108 820,108 821,108 821,108 822,108 822,108 823,108 823,108 824,108 824,108 825,108 825,108 826,108 826,108 827,108 827,108 828,108 828,108 829,108 829,108 830,108 830,108 831,108 831,108 832,108 832,108 833,108 833,107 834,107 834,108 835,108 835,108 836,108 836,108 837,108 837,108 838,108 838,108 839,108 839,108 840,108 840,108 841,108 841,108 842,108 842,108 843,108 843,108 844,108 844,108 845,108 845,107 846,107 846,108 847,108 847,108 848,108 848,108 849,108 849,108 850,108 850,108 851,108 851,108 852,108 852,107 853,107 853,107 854,107 854,108 855,108 855,108 856,108 856,108 857,108 857,109 858,109 858,108 859,108 859,108 860,108 860,108 861,108 861,108 862,108 862,108 863,108 863,108 864,108 864,108 865,108 865,108 866,108 866,108 867,108 867,108 868,108 868,108 869,108 869,108 870,108 870,108 871,108 871,108 872,108 872,108 873,108 873,108 874,108 874,108 875,108 875,108 876,108 876,108 877,108 877,108 878,108 878,108 879,108 879,187 878,187 878,189 877,189 877,187 876,187 876,187 875,187 875,187 874,187 874,187 873,187 873,187 872,187 872,187 871,187 871,189 870,189 870,187 869,187 869,187 868,187 868,190 867,190 867,187 866,187 866,187 865,187 865,187 864,187 864,187 863,187 863,187 862,187 862,187 861,187 861,187 860,187 860,193 859,193 859,187 858,187 858,187 857,187 857,188 856,188 856,187 855,187 855,187 854,187 854,186 853,186 853,187 852,187 852,187 851,187 851,187 850,187 850,187 849,187 849,193 848,193 848,187 847,187 847,188 846,188 846,187 845,187 845,187 844,187 844,187 843,187 843,187 842,187 842,187 841,187 841,191 840,191 840,186 839,186 839,188 838,188 838,187 837,187 837,191 836,191 836,187 835,187 835,187 834,187 834,192 833,192 833,186 832,186 832,191 831,191 831,187 830,187 830,186 829,186 829,186 828,186 828,192 827,192 827,187 826,187 826,188 825,188 825,187 824,187 824,187 823,187 823,187 822,187 822,187 821,187 821,187 820,187 820,188 819,188 819,191 818,191 818,187 817,187 817,187 816,187 816,187 815,187 815,187 814,187 814,187 813,187 813,187 812,187 812,187 811,187 811,187 810,187 810,187 809,187 809,187 808,187 808,193 807,193 807,187 806,187 806,187 805,187 805,193 804,193 804,188 803,188 803,187 802,187 802,193 801,193 801,189 800,189 800,187 799,187 799,187 798,187 798,190 797,190 797,188 796,188 796,186 795,186 795,187 794,187 794,187 793,187 793,187 792,187 792,192 791,192 791,187 790,187 790,187 789,187 789,187 788,187 788,187 787,187 787,187 786,187 786,187 785,187 785,193 784,193 784,187 783,187 783,187 782,187 782,187 781,187 781,187 780,187 780,187 779,187 779,187 778,187 778,193 777,193 777,187 776,187 776,187 775,187 775,187 774,187 774,187 773,187 773,193 772,193 772,188 771,188 771,188 770,188 770,188 769,188 769,192 768,192 768,193 767,193 767,187 766,187 766,187 765,187 765,187 764,187 764,187 763,187 763,187 762,187 762,188 761,188 761,192 760,192 760,187 759,187 759,187 758,187 758,187 757,187 757,188 756,188 756,187 755,187 755,188 754,188 754,187 753,187 753,187 752,187 752,187 751,187 751,187 750,187 750,186 749,186 749,187 748,187 748,187 747,187 747,187 746,187 746,187 745,187 745,186 744,186 744,187 743,187 743,187 742,187 742,187 741,187 741,188 740,188 740,187 739,187 739,187 738,187 738,187 737,187 737,187 736,187 736,187 735,187 735,187 734,187 734,187 733,187 733,187 732,187 732,187 731,187 731,188 730,188 730,187 729,187 729,187 728,187 728,187 727,187 727,187 726,187 726,187 725,187 725,187 724,187 724,189 723,189 723,187 722,187 722,186 721,186 721,187 720,187 720,187 719,187 719,187 718,187 718,187 717,187 717,187 716,187 716,187 715,187 715,187 714,187 714,188 713,188 713,186 712,186 712,189 711,189 711,187 710,187 710,187 709,187 709,187 708,187 708,189 707,189 707,187 706,187 706,187 705,187 705,187 704,187 704,192 703,192 703,187 702,187 702,187 701,187 701,186 700,186 700,192 699,192 699,187 698,187 698,187 697,187 697,187 696,187 696,187 695,187 695,187 694,187 694,186 693,186 693,191 692,191 692,187 691,187 691,190 690,190 690,187 689,187 689,191 688,191 688,187 687,187 687,190 686,190 686,187 685,187 685,192 684,192 684,187 683,187 683,192 682,192 682,186 681,186 681,187 680,187 680,189 679,189 679,189 678,189 678,187 677,187 677,192 676,192 676,187 675,187 675,187 674,187 674,187 673,187 673,188 672,188 672,187 671,187 671,187 670,187 670,187 669,187 669,187 668,187 668,187 667,187 667,190 666,190 666,187 665,187 665,186 664,186 664,187 663,187 663,188 662,188 662,192 661,192 661,187 660,187 660,187 659,187 659,190 658,190 658,187 657,187 657,187 656,187 656,187 655,187 655,187 654,187 654,187 653,187 653,188 652,188 652,186 651,186 651,187 650,187 650,187 649,187 649,188 648,188 648,187 647,187 647,187 646,187 646,187 645,187 645,187 644,187 644,187 643,187 643,192 642,192 642,187 641,187 641,187 640,187 640,187 639,187 639,190 638,190" fill="#800040"/>
<polygon points="879,122 880,122 880,122 881,122 881,122 882,122 882,122 883,122 883,122 884,122 884,122 885,122 885,121 886,121 886,122 887,122 887,121 888,121 888,122 889,122 889,122 890,122 890,119 891,119 891,122 892,122 892,122 893,122 893,119 894,119 894,122 895,122 895,122 896,122 896,122 897,122 897,121 898,121 898,123 899,123 899,121 900,121 900,122 901,122 901,123 902,123 902,122 903,122 903,122 904,122 904,120 905,120 905,122 906,122 906,122 907,122 907,122 908,122 908,122 909,122 909,122 910,122 910,122 911,122 911,122 912,122 912,122 913,122 913,122 914,122 914,122 915,122 915,122 916,122 916,121 917,121 917,119 918,119 918,122 919,122 919,122 920,122 920,120 921,120 921,122 922,122 922,122 923,122 923,122 924,122 924,121 925,121 925,122 926,122 926,123 927,123 927,122 928,122 928,122 929,122 929,122 930,122 930,121 931,121 931,122 932,122 932,120 933,120 933,122 934,122 934,121 935,121 935,123 936,123 936,122 937,122 937,120 938,120 938,122 939,122 939,123 940,123 940,122 941,122 941,123 942,123 942,120 943,120 943,122 944,122 944,119 945,119 945,119 946,119 946,122 947,122 947,122 948,122 948,122 949,122 949,121 950,121 950,122 951,122 951,122 952,122 952,123 953,123 953,121 954,121 954,120 955,120 955,122 956,122 956,119 957,119 957,122 958,122 958,119 959,119 959,119 960,119 960,123 961,123 961,121 962,121 962,122 963,122 963,122 964,122 964,186 963,186 963,186 962,186 962,188 961,188 961,186 960,186 960,186 959,186 959,186 958,186 958,186 957,186 957,186 956,186 956,186 955,186 955,186 954,186 954,187 953,187 953,186 952,186 952,186 951,186 951,186 950,186 950,186 949,186 949,186 948,186 948,186 947,186 947,186 946,186 946,186 945,186 945,186 944,186 944,189 943,189 943,186 942,186 942,186 941,186 941,186 940,186 940,188 939,188 939,186 938,186 938,186 937,186 937,186 936,186 936,186 935,186 935,188 934,188 934,186 933,186 933,186 932,186 932,186 931,186 931,186 930,186 930,186 929,186 929,189 928,189 928,186 927,186 927,186 926,186 926,189 925,189 925,186 924,186 924,186 923,186 923,188 922,188 922,186 921,186 921,186 920,186 920,186 919,186 919,186 918,186 918,186 917,186 917,186 916,186 916,186 915,186 915,187 914,187 914,186 913,186 913,186 912,186 912,186 911,186 911,186 910,186 910,186 909,186 909,187 908,187 908,186 907,186 907,186 906,186 906,188 905,188 905,186 904,186 904,186 903,186 903,189 902,189 902,186 901,186 901,186 900,186 900,186 899,186 899,186 898,186 898,186 897,186 897,186 896,186 896,186 895,186 895,186 894,186 894,187 893,187 893,187 892,187 892,186 891,186 891,186 890,186 890,186 889,186 889,187 888,187 888,186 887,186 887,186 886,186 886,186 885,186 885,186 884,186 884,186 883,186 883,186 882,186 882,186 881,186 881,186 880,186 880,186 879,186" fill="#800040"/>
<polygon points="964,118 965,118 965,118 966,118 966,118 967,118 967,118 968,118 968,118 969,118 969,118 970,118 970,118 971,118 971,118 972,118 972,118 973,118 973,118 974,118 974,118 975,118 975,118 976,118 976,118 977,118 977,118 978,118 978,118 979,118 979,118 980,118 980,118 981,118 981,117 982,117 982,118 983,118 983,118 984,118 984,118 985,118 985,118 986,118 986,118 987,118 987,118 988,118 988,118 989,118 989,118 990,118 990,119 991,119 991,118 992,118 992,118 993,118 993,117 994,117 994,118 995,118 995,118 996,118 996,118 997,118 997,118 998,118 998,118 999,118 999,118 1000,118 1000,118 1001,118 1001,118 1002,118 1002,117 1003,117 1003,118 1004,118 1004,118 1005,118 1005,118 1006,118 1006,118 1007,118 1007,118 1008,118 1008,118 1009,118 1009,118 1010,118 1010,118 1011,118 1011,118 1012,118 1012,118 1013,118 1013,118 1014,118 1014,118 1015,118 1015,118 1016,118 1016,118 1017,118 1017,118 1018,118 1018,118 1019,118 1019,118 1020,118 1020,118 1021,118 1021,118 1022,118 1022,118 1023,118 1023,118 1024,118 1024,118 1025,118 1025,118 1026,118 1026,118 1027,118 1027,118 1028,118 1028,118 1029,118 1029,118 1030,118 1030,118 1031,118 1031,119 1032,119 1032,118 1033,118 1033,118 1034,118 1034,118 1035,118 1035,118 1036,118 1036,118 1037,118 1037,118 1038,118 1038,118 1039,118 1039,118 1040,118 1040,118 1041,118 1041,118 1042,118 1042,118 1043,118 1043,118 1044,118 1044,118 1045,118 1045,118 1046,118 1046,118 1047,118 1047,118 1048,118 1048,118 1049,118 1049,117 1050,117 1050,118 1051,118 1051,118 1052,118 1052,118 1053,118 1053,118 1054,118 1054,118 1055,118 1055,118 1056,118 1056,118 1057,118 1057,118 1058,118 1058,118 1059,118 1059,118 1060,118 1060,119 1061,119 1061,118 1062,118 1062,118 1063,118 1063,119 1064,119 1064,118 1065,118 1065,118 1066,118 1066,118 1067,118 1067,119 1068,119 1068,118 1069,118 1069,118 1070,118 1070,118 1071,118 1071,118 1072,118 1072,118 1073,118 1073,118 1074,118 1074,118 1075,118 1075,118 1076,118 1076,118 1077,118 1077,118 1078,118 1078,118 1079,118 1079,118 1080,118 1080,118 1081,118 1081,118 1082,118 1082,118 1083,118 1083,118 1084,118 1084,118 1085,118 1085,118 1086,118 1086,118 1087,118 1087,118 1088,118 1088,117 1089,117 1089,118 1090,118 1090,118 1091,118 1091,118 1092,118 1092,118 1093,118 1093,118 1094,118 1094,118 1095,118 1095,118 1096,118 1096,118 1097,118 1097,118 1098,118 1098,118 1099,118 1099,118 1100,118 1100,118 1101,118 1101,118 1102,118 1102,118 1103,118 1103,118 1104,118 1104,118 1105,118 1105,118 1106,118 1106,118 1107,118 1107,118 1108,118 1108,118 1109,118 1109,118 1110,118 1110,118 1111,118 1111,118 1112,118 1112,118 1113,118 1113,118 1114,118 1114,118 1115,118 1115,118 1116,118 1116,119 1117,119 1117,118 1118,118 1118,186 1117,186 1117,186 1116,186 1116,186 1115,186 1115,186 1114,186 1114,186 1113,186 1113,186 1112,186 1112,186 1111,186 1111,187 1110,187 1110,186 1109,186 1109,186 1108,186 1108,186 1107,186 1107,186 1106,186 1106,186 1105,186 1105,186 1104,186 1104,186 1103,186 1103,186 1102,186 1102,186 1101,186 1101,186 1100,186 1100,186 1099,186 1099,188 1098,188 1098,186 1097,186 1097,187 1096,187 1096,186 1095,186 1095,188 1094,188 1094,186 1093,186 1093,186 1092,186 1092,186 1091,186 1091,186 1090,186 1090,186 1089,186 1089,186 1088,186 1088,186 1087,186 1087,186 1086,186 1086,186 1085,186 1085,186 1084,186 1084,186 1083,186 1083,186 1082,186 1082,188 1081,188 1081,186 1080,186 1080,186 1079,186 1079,186 1078,186 1078,186 1077,186 1077,185 1076,185 1076,186 1075,186 1075,186 1074,186 1074,186 1073,186 1073,186 1072,186 1072,186 1071,186 1071,186 1070,186 1070,186 1069,186 1069,186 1068,186 1068,186 1067,186 1067,186 1066,186 1066,186 1065,186 1065,186 1064,186 1064,186 1063,186 1063,186 1062,186 1062,186 1061,186 1061,186 1060,186 1060,186 1059,186 1059,188 1058,188 1058,187 1057,187 1057,186 1056,186 1056,186 1055,186 1055,188 1054,188 1054,186 1053,186 1053,187 1052,187 1052,186 1051,186 1051,186 1050,186 1050,186 1049,186 1049,186 1048,186 1048,186 1047,186 1047,186 1046,186 1046,186 1045,186 1045,186 1044,186 1044,186 1043,186 1043,186 1042,186 1042,185 1041,185 1041,186 1040,186 1040,186 1039,186 1039,185 1038,185 1038,185 1037,185 1037,186 1036,186 1036,186 1035,186 1035,186 1034,186 1034,186 1033,186 1033,186 1032,186 1032,187 1031,187 1031,186 1030,186 1030,186 1029,186 1029,185 1028,185 1028,186 1027,186 1027,186 1026,186 1026,187 1025,187 1025,186 1024,186 1024,186 1023,186 1023,187 1022,187 1022,186 1021,186 1021,186 1020,186 1020,188 1019,188 1019,186 1018,186 1018,186 1017,186 1017,186 1016,186 1016,186 1015,186 1015,186 1014,186 1014,187 1013,187 1013,186 1012,186 1012,186 1011,186 1011,186 1010,186 1010,186 1009,186 1009,186 1008,186 1008,186 1007,186 1007,186 1006,186 1006,186 1005,186 1005,186 1004,186 1004,186 1003,186 1003,186 1002,186 1002,186 1001,186 1001,186 1000,186 1000,186 999,186 999,186 998,186 998,186 997,186 997,186 996,186 996,186 995,186 995,186 994,186 994,186 993,186 993,186 992,186 992,186 991,186 991,186 990,186 990,185 989,185 989,186 988,186 988,186 987,186 987,186 986,186 986,187 985,187 985,186 984,186 984,186 983,186 983,186 982,186 982,186 981,186 981,186 980,186 980,186 979,186 979,186 978,186 978,186 977,186 977,187 976,187 976,186 975,186 975,185 974,185 974,186 973,186 973,186 972,186 972,186 971,186 971,186 970,186 970,186 969,186 969,186 968,186 968,186 967,186 967,186 966,186 966,186 965,186 965,186 964,186" fill="#800040"/>
<polygon points="1118,108 1119,108 1119,108 1120,108 1120,108 1121,108 1121,108 1122,108 1122,108 1123,108 1123,108 1124,108 1124,108 1125,108 1125,108 1126,108 1126,108 1127,108 1127,108 1128,108 1128,108 1129,108 1129,108 1130,108 1130,108 1131,108 1131,108 1132,108 1132,108 1133,108 1133,108 1134,108 1134,108 1135,108 1135,108 1136,108 1136,109 1137,109 1137,108 1138,108 1138,108 1139,108 1139,108 1140,108 1140,107 1141,107 1141,108 1142,108 1142,108 1143,108 1143,107 1144,107 1144,108 1145,108 1145,108 1146,108 1146,108 1147,108 1147,108 1148,108 1148,108 1149,108 1149,108 1150,108 1150,109 1151,109 1151,108 1152,108 1152,108 1153,108 1153,108 1154,108 1154,108 1155,108 1155,108 1156,108 1156,109 1157,109 1157,108 1158,108 1158,108 1159,108 1159,108 1160,108 1160,108 1161,108 1161,108 1162,108 1162,108 1163,108 1163,108 1164,108 1164,108 1165,108 1165,108 1166,108 1166,108 1167,108 1167,108 1168,108 1168,108 1169,108 1169,108 1170,108 1170,108 1171,108 1171,108 1172,108 1172,107 1173,107 1173,108 1174,108 1174,108 1175,108 1175,108 1176,108 1176,108 1177,108 1177,108 1178,108 1178,109 1179,109 1179,108 1180,108 1180,108 1181,108 1181,108 1182,108 1182,108 1183,108 1183,108 1184,108 1184,108 1185,108 1185,108 1186,108 1186,108 1187,108 1187,108 1188,108 1188,108 1189,108 1189,108 1190,108 1190,108 1191,108 1191,108 1192,108 1192,108 1193,108 1193,108 1194,108 1194,108 1195,108 1195,108 1196,108 1196,108 1197,108 1197,108 1198,108 1198,108 1199,108 1199,108 1200,108 1200,108 1201,108 1201,109 1202,109 1202,108 1203,108 1203,108 1204,108 1204,108 1205,108 1205,108 1206,108 1206,108 1207,108 1207,108 1208,108 1208,108 1209,108 1209,108 1210,108 1210,107 1211,107 1211,108 1212,108 1212,108 1213,108 1213,108 1214,108 1214,108 1215,108 1215,108 1216,108 1216,108 1217,108 1217,108 1218,108 1218,108 1219,108 1219,108 1220,108 1220,108 1221,108 1221,108 1222,108 1222,108 1223,108 1223,108 1224,108 1224,108 1225,108 1225,108 1226,108 1226,108 1227,108 1227,108 1228,108 1228,108 1229,108 1229,108 1230,108 1230,108 1231,108 1231,108 1232,108 1232,108 1233,108 1233,108 1234,108 1234,108 1235,108 1235,108 1236,108 1236,108 1237,108 1237,108 1238,108 1238,108 1239,108 1239,108 1240,108 1240,108 1241,108 1241,108 1242,108 1242,108 1243,108 1243,108 1244,108 1244,108 1245,108 1245,108 1246,108 1246,108 1247,108 1247,108 1248,108 1248,109 1249,109 1249,108 1250,108 1250,108 1251,108 1251,108 1252,108 1252,108 1253,108 1253,108 1254,108 1254,108 1255,108 1255,107 1256,107 1256,108 1257,108 1257,108 1258,108 1258,108 1259,108 1259,108 1260,108 1260,108 1261,108 1261,108 1262,108 1262,108 1263,108 1263,108 1264,108 1264,108 1265,108 1265,109 1266,109 1266,108 1267,108 1267,108 1268,108 1268,108 1269,108 1269,191 1268,191 1268,187 1267,187 1267,187 1266,187 1266,193 1265,193 1265,190 1264,190 1264,187 1263,187 1263,190 1262,190 1262,186 1261,186 1261,190 1260,190 1260,187 1259,187 1259,190 1258,190 1258,187 1257,187 1257,187 1256,187 1256,192 1255,192 1255,188 1254,188 1254,187 1253,187 1253,187 1252,187 1252,187 1251,187 1251,187 1250,187 1250,186 1249,186 1249,187 1248,187 1248,193 1247,193 1247,187 1246,187 1246,187 1245,187 1245,192 1244,192 1244,186 1243,186 1243,187 1242,187 1242,190 1241,190 1241,187 1240,187 1240,187 1239,187 1239,187 1238,187 1238,189 1237,189 1237,193 1236,193 1236,191 1235,191 1235,187 1234,187 1234,189 1233,189 1233,187 1232,187 1232,187 1231,187 1231,187 1230,187 1230,187 1229,187 1229,193 1228,193 1228,187 1227,187 1227,187 1226,187 1226,186 1225,186 1225,190 1224,190 1224,186 1223,186 1223,187 1222,187 1222,187 1221,187 1221,187 1220,187 1220,187 1219,187 1219,188 1218,188 1218,193 1217,193 1217,187 1216,187 1216,187 1215,187 1215,187 1214,187 1214,189 1213,189 1213,187 1212,187 1212,187 1211,187 1211,190 1210,190 1210,187 1209,187 1209,187 1208,187 1208,189 1207,189 1207,191 1206,191 1206,187 1205,187 1205,187 1204,187 1204,187 1203,187 1203,187 1202,187 1202,187 1201,187 1201,190 1200,190 1200,192 1199,192 1199,187 1198,187 1198,187 1197,187 1197,187 1196,187 1196,193 1195,193 1195,193 1194,193 1194,187 1193,187 1193,186 1192,186 1192,187 1191,187 1191,187 1190,187 1190,187 1189,187 1189,187 1188,187 1188,190 1187,190 1187,192 1186,192 1186,187 1185,187 1185,187 1184,187 1184,187 1183,187 1183,187 1182,187 1182,187 1181,187 1181,187 1180,187 1180,187 1179,187 1179,187 1178,187 1178,191 1177,191 1177,187 1176,187 1176,187 1175,187 1175,187 1174,187 1174,193 1173,193 1173,186 1172,186 1172,187 1171,187 1171,187 1170,187 1170,187 1169,187 1169,187 1168,187 1168,187 1167,187 1167,190 1166,190 1166,187 1165,187 1165,187 1164,187 1164,187 1163,187 1163,193 1162,193 1162,187 1161,187 1161,193 1160,193 1160,187 1159,187 1159,187 1158,187 1158,187 1157,187 1157,187 1156,187 1156,191 1155,191 1155,187 1154,187 1154,189 1153,189 1153,187 1152,187 1152,193 1151,193 1151,190 1150,190 1150,187 1149,187 1149,193 1148,193 1148,191 1147,191 1147,191 1146,191 1146,192 1145,192 1145,187 1144,187 1144,187 1143,187 1143,187 1142,187 1142,187 1141,187 1141,187 1140,187 1140,187 1139,187 1139,187 1138,187 1138,192 1137,192 1137,187 1136,187 1136,187 1135,187 1135,187 1134,187 1134,193 1133,193 1133,187 1132,187 1132,187 1131,187 1131,187 1130,187 1130,187 1129,187 1129,187 1128,187 1128,191 1127,191 1127,187 1126,187 1126,192 1125,192 1125,189 1124,189 1124,188 1123,188 1123,192 1122,192 1122,187 1121,187 1121,187 1120,187 1120,189 1119,189 1119,187 1118,187" fill="#800040"/>
<polygon points="70,212 71,212 71,212 72,212 72,212 73,212 73,212 74,212 74,212 75,212 75,212 76,212 76,212 77,212 77,212 78,212 78,212 79,212 79,212 80,212 80,212 81,212 81,212 82,212 82,212 83,212 83,212 84,212 84,212 85,212 85,212 86,212 86,212 87,212 87,213 88,213 88,212 89,212 89,212 90,212 90,212 91,212 91,212 92,212 92,212 93,212 93,212 94,212 94,212 95,212 95,212 96,212 96,212 97,212 97,212 98,212 98,212 99,212 99,212 100,212 100,212 101,212 101,211 102,211 102,212 103,212 103,212 104,212 104,212 105,212 105,212 106,212 106,212 107,212 107,212 108,212 108,212 109,212 109,212 110,212 110,212 111,212 111,212 112,212 112,212 113,212 113,212 114,212 114,212 115,212 115,211 116,211 116,212 117,212 117,212 118,212 118,212 119,212 119,212 120,212 120,212 121,212 121,213 122,213 122,212 123,212 123,212 124,212 124,212 125,212 125,212 126,212 126,212 127,212 127,212 128,212 128,212 129,212 129,212 130,212 130,212 131,212 131,212 132,212 132,212 133,212 133,212 134,212 134,212 135,212 135,212 136,212 136,212 137,212 137,213 138,213 138,212 139,212 139,212 140,212 140,212 141,212 141,212 142,212 142,212 143,212 143,212 144,212 144,211 145,211 145,212 146,212 146,212 147,212 147,211 148,211 148,212 149,212 149,212 150,212 150,213 151,213 151,212 152,212 152,212 153,212 153,212 154,212 154,212 155,212 155,212 156,212 156,212 157,212 157,212 158,212 158,224 157,224 157,224 156,224 156,224 155,224 155,225 154,225 154,224 153,224 153,224 152,224 152,224 151,224 151,224 150,224 150,224 149,224 149,224 148,224 148,224 147,224 147,224 146,224 146,224 145,224 145,224 144,224 144,224 143,224 143,224 142,224 142,224 141,224 141,224 140,224 140,224 139,224 139,224 138,224 138,224 137,224 137,224 136,224 136,225 135,225 135,224 134,224 134,224 133,224 133,224 132,224 132,224 131,224 131,224 130,224 130,224 129,224 129,224 128,224 128,224 127,224 127,224 126,224 126,224 125,224 125,224 124,224 124,224 123,224 123,224 122,224 122,224 121,224 121,224 120,224 120,224 119,224 119,224 118,224 118,224 117,224 117,224 116,224 116,224 115,224 115,224 114,224 114,224 113,224 113,225 112,225 112,224 111,224 111,223 110,223 110,224 109,224 109,224 108,224 108,224 107,224 107,224 106,224 106,224 105,224 105,224 104,224 104,224 103,224 103,225 102,225 102,224 101,224 101,224 100,224 100,224 99,224 99,224 98,224 98,224 97,224 97,224 96,224 96,224 95,224 95,225 94,225 94,224 93,224 93,224 92,224 92,224 91,224 91,224 90,224 90,224 89,224 89,224 88,224 88,224 87,224 87,224 86,224 86,224 85,224 85,225 84,225 84,224 83,224 83,225 82,225 82,224 81,224 81,224 80,224 80,224 79,224 79,224 78,224 78,224 77,224 77,224 76,224 76,224 75,224 75,224 74,224 74,224 73,224 73,224 72,224 72,224 71,224 71,225 70,225" fill="#808000"/>
<rect x="158" y="230" width="241" height="2" fill="#808000"/>
<rect x="225" y="232" width="1" height="1" fill="#808000"/>
<rect x="230" y="229" width="1" height="1" fill="#808000"/>
<rect x="280" y="232" width="1" height="1" fill="#808000"/>
<rect x="293" y="232" width="1" height="1" fill="#808000"/>
<rect x="347" y="229" width="3" height="1" fill="#808000"/>
<rect x="358" y="232" width="1" height="1" fill="#808000"/>
<rect x="372" y="229" width="1" height="1" fill="#808000"/>
<rect x="385" y="229" width="3" height="1" fill="#808000"/>
<rect x="399" y="239" width="85" height="2" fill="#808000"/>
<rect x="402" y="238" width="2" height="1" fill="#808000"/>
<rect x="454" y="241" width="2" height="1" fill="#808000"/>
<rect x="465" y="238" width="1" height="1" fill="#808000"/>
<polygon points="484,212 485,212 485,212 486,212 486,212 487,212 487,212 488,212 488,212 489,212 489,212 490,212 490,212 491,212 491,212 492,212 492,212 493,212 493,212 494,212 494,213 495,213 495,211 496,211 496,212 497,212 497,212 498,212 498,212 499,212 499,212 500,212 500,212 501,212 501,212 502,212 502,212 503,212 503,212 504,212 504,212 505,212 505,212 506,212 506,212 507,212 507,212 508,212 508,212 509,212 509,212 510,212 510,212 511,212 511,212 512,212 512,212 513,212 513,211 514,211 514,212 515,212 515,212 516,212 516,212 517,212 517,212 518,212 518,212 519,212 519,212 520,212 520,212 521,212 521,212 522,212 522,212 523,212 523,212 524,212 524,213 525,213 525,212 526,212 526,212 527,212 527,212 528,212 528,212 529,212 529,212 530,212 530,212 531,212 531,212 532,212 532,212 533,212 533,212 534,212 534,212 535,212 535,212 536,212 536,212 537,212 537,212 538,212 538,212 539,212 539,212 540,212 540,212 541,212 541,212 542,212 542,212 543,212 543,212 544,212 544,212 545,212 545,212 546,212 546,212 547,212 547,212 548,212 548,212 549,212 549,212 550,212 550,211 551,211 551,212 552,212 552,212 553,212 553,212 554,212 554,212 555,212 555,212 556,212 556,213 557,213 557,212 558,212 558,212 559,212 559,212 560,212 560,212 561,212 561,212 562,212 562,212 563,212 563,211 564,211 564,212 565,212 565,212 566,212 566,212 567,212 567,212 568,212 568,212 569,212 569,212 570,212 570,212 571,212 571,212 572,212 572,212 573,212 573,212 574,212 574,212 575,212 575,212 576,212 576,212 577,212 577,212 578,212 578,212 579,212 579,211 580,211 580,212 581,212 581,212 582,212 582,212 583,212 583,213 584,213 584,212 585,212 585,212 586,212 586,212 587,212 587,212 588,212 588,213 589,213 589,212 590,212 590,212 591,212 591,212 592,212 592,212 593,212 593,212 594,212 594,212 595,212 595,212 596,212 596,212 597,212 597,212 598,212 598,212 599,212 599,212 600,212 600,212 601,212 601,212 602,212 602,212 603,212 603,212 604,212 604,212 605,212 605,212 606,212 606,212 607,212 607,212 608,212 608,212 609,212 609,212 610,212 610,212 611,212 611,212 612,212 612,212 613,212 613,212 614,212 614,212 615,212 615,213 616,213 616,212 617,212 617,212 618,212 618,212 619,212 619,212 620,212 620,212 621,212 621,212 622,212 622,212 623,212 623,212 624,212 624,212 625,212 625,212 626,212 626,212 627,212 627,212 628,212 628,212 629,212 629,212 630,212 630,212 631,212 631,212 632,212 632,212 633,212 633,212 634,212 634,212 635,212 635,212 636,212 636,212 637,212 637,212 638,212 638,224 637,224 637,225 636,225 636,224 635,224 635,224 634,224 634,224 633,224 633,224 632,224 632,224 631,224 631,224 630,224 630,224 629,224 629,224 628,224 628,224 627,224 627,225 626,225 626,224 625,224 625,224 624,224 624,224 623,224 623,224 622,224 622,224 621,224 621,224 620,224 620,224 619,224 619,224 618,224 618,224 617,224 617,224 616,224 616,224 615,224 615,225 614,225 614,224 613,224 613,224 612,224 612,224 611,224 611,224 610,224 610,224 609,224 609,224 608,224 608,224 607,224 607,224 606,224 606,224 605,224 605,224 604,224 604,224 603,224 603,224 602,224 602,224 601,224 601,224 600,224 600,223 599,223 599,224 598,224 598,224 597,224 597,224 596,224 596,224 595,224 595,225 594,225 594,224 593,224 593,224 592,224 592,224 591,224 591,224 590,224 590,224 589,224 589,224 588,224 588,225 587,225 587,225 586,225 586,225 585,225 585,224 584,224 584,224 583,224 583,224 582,224 582,224 581,224 581,224 580,224 580,224 579,224 579,224 578,224 578,224 577,224 577,223 576,223 576,223 575,223 575,224 574,224 574,224 573,224 573,224 572,224 572,224 571,224 571,224 570,224 570,224 569,224 569,225 568,225 568,224 567,224 567,224 566,224 566,224 565,224 565,224 564,224 564,224 563,224 563,224 562,224 562,223 561,223 561,224 560,224 560,224 559,224 559,224 558,224 558,224 557,224 557,225 556,225 556,224 555,224 555,225 554,225 554,224 553,224 553,224 552,224 552,224 551,224 551,224 550,224 550,224 549,224 549,225 548,225 548,224 547,224 547,224 546,224 546,224 545,224 545,224 544,224 544,224 543,224 543,225 542,225 542,224 541,224 541,224 540,224 540,224 539,224 539,224 538,224 538,224 537,224 537,224 536,224 536,225 535,225 535,224 534,224 534,224 533,224 533,224 532,224 532,223 531,223 531,224 530,224 530,225 529,225 529,223 528,223 528,223 527,223 527,224 526,224 526,224 525,224 525,225 524,225 524,224 523,224 523,224 522,224 522,225 521,225 521,224 520,224 520,224 519,224 519,224 518,224 518,225 517,225 517,224 516,224 516,224 515,224 515,224 514,224 514,224 513,224 513,224 512,224 512,224 511,224 511,223 510,223 510,224 509,224 509,224 508,224 508,224 507,224 507,224 506,224 506,224 505,224 505,224 504,224 504,224 503,224 503,224 502,224 502,224 501,224 501,224 500,224 500,224 499,224 499,224 498,224 498,224 497,224 497,224 496,224 496,224 495,224 495,224 494,224 494,224 493,224 493,224 492,224 492,224 491,224 491,224 490,224 490,224 489,224 489,224 488,224 488,224 487,224 487,224 486,224 486,224 485,224 485,225 484,225" fill="#808000"/>
<rect x="638" y="230" width="241" height="2" fill="#808000"/>
<rect x="658" y="232" width="2" height="1" fill="#808000"/>
<rect x="699" y="229" width="1" height="1" fill="#808000"/>
<rect x="719" y="229" width="1" height="1" fill="#808000"/>
<rect x="812" y="229" width="1" height="1" fill="#808000"/>
<rect x="822" y="232" width="3" height="1" fill="#808000"/>
<rect x="845" y="232" width="2" height="1" fill="#808000"/>
<rect x="879" y="239" width="85" height="2" fill="#808000"/>
<rect x="882" y="238" width="2" height="1" fill="#808000"/>
<rect x="904" y="238" width="3" height="1" fill="#808000"/>
<polygon points="964,212 965,212 965,212 966,212 966,212 967,212 967,212 968,212 968,212 969,212 969,212 970,212 970,212 971,212 971,212 972,212 972,212 973,212 973,212 974,212 974,212 975,212 975,212 976,212 976,212 977,212 977,212 978,212 978,212 979,212 979,213 980,213 980,212 981,212 981,212 982,212 982,212 983,212 983,212 984,212 984,212 985,212 985,212 986,212 986,212 987,212 987,212 988,212 988,212 989,212 989,212 990,212 990,212 991,212 991,212 992,212 992,212 993,212 993,212 994,212 994,212 995,212 995,212 996,212 996,212 997,212 997,212 998,212 998,212 999,212 999,212 1000,212 1000,213 1001,213 1001,212 1002,212 1002,212 1003,212 1003,212 1004,212 1004,212 1005,212 1005,212 1006,212 1006,212 1007,212 1007,212 1008,212 1008,212 1009,212 1009,212 1010,212 1010,212 1011,212 1011,212 1012,212 1012,212 1013,212 1013,212 1014,212 1014,212 1015,212 1015,212 1016,212 1016,212 1017,212 1017,212 1018,212 1018,212 1019,212 1019,212 1020,212 1020,212 1021,212 1021,212 1022,212 1022,212 1023,212 1023,212 1024,212 1024,212 1025,212 1025,212 1026,212 1026,212 1027,212 1027,212 1028,212 1028,212 1029,212 1029,212 1030,212 1030,212 1031,212 1031,212 1032,212 1032,212 1033,212 1033,212 1034,212 1034,212 1035,212 1035,212 1036,212 1036,211 1037,211 1037,212 1038,212 1038,212 1039,212 1039,212 1040,212 1040,212 1041,212 1041,212 1042,212 1042,212 1043,212 1043,212 1044,212 1044,212 1045,212 1045,212 1046,212 1046,213 1047,213 1047,212 1048,212 1048,212 1049,212 1049,212 1050,212 1050,212 1051,212 1051,212 1052,212 1052,212 1053,212 1053,212 1054,212 1054,212 1055,212 1055,212 1056,212 1056,212 1057,212 1057,212 1058,212 1058,212 1059,212 1059,212 1060,212 1060,212 1061,212 1061,213 1062,213 1062,212 1063,212 1063,212 1064,212 1064,212 1065,212 1065,212 1066,212 1066,212 1067,212 1067,212 1068,212 1068,212 1069,212 1069,211 1070,211 1070,212 1071,212 1071,212 1072,212 1072,212 1073,212 1073,212 1074,212 1074,212 1075,212 1075,212 1076,212 1076,212 1077,212 1077,212 1078,212 1078,212 1079,212 1079,212 1080,212 1080,212 1081,212 1081,212 1082,212 1082,212 1083,212 1083,212 1084,212 1084,212 1085,212 1085,212 1086,212 1086,212 1087,212 1087,212 1088,212 1088,212 1089,212 1089,212 1090,212 1090,212 1091,212 1091,212 1092,212 1092,212 1093,212 1093,212 1094,212 1094,212 1095,212 1095,212 1096,212 1096,212 1097,212 1097,212 1098,212 1098,212 1099,212 1099,212 1100,212 1100,212 1101,212 1101,212 1102,212 1102,212 1103,212 1103,212 1104,212 1104,212 1105,212 1105,212 1106,212 1106,212 1107,212 1107,212 1108,212 1108,212 1109,212 1109,212 1110,212 1110,212 1111,212 1111,212 1112,212 1112,212 1113,212 1113,212 1114,212 1114,212 1115,212 1115,212 1116,212 1116,212 1117,212 1117,212 1118,212 1118,224 1117,224 1117,223 1116,223 1116,224 1115,224 1115,224 1114,224 1114,224 1113,224 1113,224 1112,224 1112,224 1111,224 1111,224 1110,224 1110,224 1109,224 1109,224 1108,224 1108,224 1107,224 1107,224 1106,224 1106,224 1105,224 1105,224 1104,224 1104,224 1103,224 1103,224 1102,224 1102,224 1101,224 1101,224 1100,224 1100,224 1099,224 1099,224 1098,224 1098,224 1097,224 1097,223 1096,223 1096,224 1095,224 1095,224 1094,224 1094,224 1093,224 1093,224 1092,224 1092,224 1091,224 1091,224 1090,224 1090,225 1089,225 1089,224 1088,224 1088,224 1087,224 1087,224 1086,224 1086,224 1085,224 1085,224 1084,224 1084,224 1083,224 1083,224 1082,224 1082,224 1081,224 1081,223 1080,223 1080,224 1079,224 1079,224 1078,224 1078,225 1077,225 1077,223 1076,223 1076,224 1075,224 1075,224 1074,224 1074,224 1073,224 1073,224 1072,224 1072,224 1071,224 1071,223 1070,223 1070,224 1069,224 1069,225 1068,225 1068,224 1067,224 1067,224 1066,224 1066,224 1065,224 1065,224 1064,224 1064,224 1063,224 1063,224 1062,224 1062,224 1061,224 1061,224 1060,224 1060,224 1059,224 1059,224 1058,224 1058,224 1057,224 1057,224 1056,224 1056,224 1055,224 1055,224 1054,224 1054,224 1053,224 1053,224 1052,224 1052,225 1051,225 1051,223 1050,223 1050,224 1049,224 1049,224 1048,224 1048,224 1047,224 1047,224 1046,224 1046,224 1045,224 1045,224 1044,224 1044,224 1043,224 1043,224 1042,224 1042,224 1041,224 1041,224 1040,224 1040,224 1039,224 1039,224 1038,224 1038,224 1037,224 1037,224 1036,224 1036,224 1035,224 1035,224 1034,224 1034,224 1033,224 1033,224 1032,224 1032,224 1031,224 1031,224 1030,224 1030,224 1029,224 1029,224 1028,224 1028,225 1027,225 1027,224 1026,224 1026,224 1025,224 1025,225 1024,225 1024,224 1023,224 1023,224 1022,224 1022,224 1021,224 1021,224 1020,224 1020,224 1019,224 1019,224 1018,224 1018,225 1017,225 1017,224 1016,224 1016,225 1015,225 1015,224 1014,224 1014,224 1013,224 1013,224 1012,224 1012,225 1011,225 1011,224 1010,224 1010,224 1009,224 1009,224 1008,224 1008,224 1007,224 1007,224 1006,224 1006,224 1005,224 1005,225 1004,225 1004,224 1003,224 1003,224 1002,224 1002,224 1001,224 1001,224 1000,224 1000,224 999,224 999,224 998,224 998,224 997,224 997,224 996,224 996,224 995,224 995,224 994,224 994,224 993,224 993,224 992,224 992,224 991,224 991,224 990,224 990,224 989,224 989,224 988,224 988,224 987,224 987,224 986,224 986,224 985,224 985,224 984,224 984,225 983,225 983,224 982,224 982,224 981,224 981,224 980,224 980,224 979,224 979,224 978,224 978,224 977,224 977,224 976,224 976,224 975,224 975,224 974,224 974,224 973,224 973,224 972,224 972,224 971,224 971,224 970,224 970,224 969,224 969,224 968,224 968,223 967,223 967,224 966,224 966,224 965,224 965,224 964,224" fill="#808000"/>
<rect x="1118" y="230" width="151" height="2" fill="#808000"/>
<rect x="1136" y="232" width="3" height="1" fill="#808000"/>
<rect x="1166" y="232" width="3" height="1" fill="#808000"/>
<rect x="1189" y="229" width="1" height="1" fill="#808000"/>
<rect x="158" y="206" width="2" height="39" fill="#808000"/>
<rect x="638" y="206" width="2" height="39" fill="#808000"/>
<rect x="1118" y="206" width="2" height="39" fill="#808000"/>
<rect x="399" y="230" width="2" height="12" fill="#808000"/>
<rect x="879" y="230" width="2" height="12" fill="#808000"/>
<rect x="484" y="212" width="2" height="30" fill="#808000"/>
<rect x="960" y="122" width="6" height="63" fill="#ff0a8c"/>
<line x1="964" y1="38" x2="964" y2="318" stroke="#fff" stroke-width="4" stroke-dasharray="18 6"/>
<polygon points="955,160 971,160 963.0,166" fill="#fff"/>
<polygon points="957,188 971,188 964.0,183" fill="#fff"/>
<polygon points="958,218 971,218 964.5,213" fill="#fff"/>
<polygon points="957,233 969,233 963.0,239" fill="#fff"/>
<rect x="955" y="318" width="17" height="9" rx="3" fill="#fff"/>
<text x="963.5" y="326" font-size="9" text-anchor="middle" fill="#000" font-family="Liberation Sans">C2</text>
<polygon points="1278,157 1278,167 1270,162" fill="#ffff00"/>
<polygon points="1278,209 1278,219 1270,214" fill="#ffff00"/>
<polygon points="636,338 644,338 640,330" fill="#ffff00"/>
<rect x="54" y="171" width="16" height="11" rx="2" fill="#ff0a8c"/>
<text x="62" y="180.5" font-size="10" text-anchor="middle" fill="#000" font-family="Liberation Sans">C2</text>
<rect x="58" y="183" width="13" height="2" fill="#ff0a8c"/>
<text x="63" y="254.5" font-size="10" text-anchor="middle" fill="#ffff00" font-family="Liberation Sans">C1</text>
<rect x="60" y="257" width="10" height="2" fill="#ffff00"/>
<line x1="70" y1="400.5" x2="1269" y2="400.5" stroke="#8a8a8a" stroke-width="1" stroke-dasharray="1 1"/>
<line x1="70" y1="436.5" x2="1269" y2="436.5" stroke="#8a8a8a" stroke-width="1" stroke-dasharray="1 1"/>
<line x1="70" y1="473.5" x2="1269" y2="473.5" stroke="#8a8a8a" stroke-width="1" stroke-dasharray="1 1"/>
<line x1="70" y1="546.5" x2="1269" y2="546.5" stroke="#8a8a8a" stroke-width="1" stroke-dasharray="1 1"/>
<line x1="70" y1="582.5" x2="1269" y2="582.5" stroke="#8a8a8a" stroke-width="1" stroke-dasharray="1 1"/>
<line x1="70" y1="619.5" x2="1269" y2="619.5" stroke="#8a8a8a" stroke-width="1" stroke-dasharray="1 1"/>
<line x1="190.5" y1="363" x2="190.5" y2="654" stroke="#8a8a8a" stroke-width="1" stroke-dasharray="1 1"/>
<line x1="310.5" y1="363" x2="310.5" y2="654" stroke="#8a8a8a" stroke-width="1" stroke-dasharray="1 1"/>
<line x1="430.5" y1="363" x2="430.5" y2="654" stroke="#8a8a8a" stroke-width="1" stroke-dasharray="1 1"/>
<line x1="550.5" y1="363" x2="550.5" y2="654" stroke="#8a8a8a" stroke-width="1" stroke-dasharray="1 1"/>
<line x1="790.5" y1="363" x2="790.5" y2="654" stroke="#8a8a8a" stroke-width="1" stroke-dasharray="1 1"/>
<line x1="910.5" y1="363" x2="910.5" y2="654" stroke="#8a8a8a" stroke-width="1" stroke-dasharray="1 1"/>
<line x1="1030.5" y1="363" x2="1030.5" y2="654" stroke="#8a8a8a" stroke-width="1" stroke-dasharray="1 1"/>
<line x1="1150.5" y1="363" x2="1150.5" y2="654" stroke="#8a8a8a" stroke-width="1" stroke-dasharray="1 1"/>
<rect x="94" y="417" width="1" height="1" fill="#8a8a8a"/>
<rect x="118" y="417" width="1" height="1" fill="#8a8a8a"/>
<rect x="142" y="417" width="1" height="1" fill="#8a8a8a"/>
<rect x="166" y="417" width="1" height="1" fill="#8a8a8a"/>
<rect x="190" y="417" width="1" height="1" fill="#8a8a8a"/>
<rect x="214" y="417" width="1" height="1" fill="#8a8a8a"/>
<rect x="238" y="417" width="1" height="1" fill="#8a8a8a"/>
<rect x="262" y="417" width="1" height="1" fill="#8a8a8a"/>
<rect x="286" y="417" width="1" height="1" fill="#8a8a8a"/>
<rect x="310" y="417" width="1" height="1" fill="#8a8a8a"/>
<rect x="334" y="417" width="1" height="1" fill="#8a8a8a"/>
<rect x="358" y="417" width="1" height="1" fill="#8a8a8a"/>
<rect x="382" y="417" width="1" height="1" fill="#8a8a8a"/>
<rect x="406" y="417" width="1" height="1" fill="#8a8a8a"/>
<rect x="430" y="417" width="1" height="1" fill="#8a8a8a"/>
<rect x="454" y="417" width="1" height="1" fill="#8a8a8a"/>
<rect x="478" y="417" width="1" height="1" fill="#8a8a8a"/>
<rect x="502" y="417" width="1" height="1" fill="#8a8a8a"/>
<rect x="526" y="417" width="1" height="1" fill="#8a8a8a"/>
<rect x="550" y="417" width="1" height="1" fill="#8a8a8a"/>
<rect x="574" y="417" width="1" height="1" fill="#8a8a8a"/>
<rect x="598" y="417" width="1" height="1" fill="#8a8a8a"/>
<rect x="622" y="417" width="1" height="1" fill="#8a8a8a"/>
<rect x="646" y="417" width="1" height="1" fill="#8a8a8a"/>
<rect x="670" y="417" width="1" height="1" fill="#8a8a8a"/>
<rect x="694" y="417" width="1" height="1" fill="#8a8a8a"/>
<rect x="718" y="417" width="1" height="1" fill="#8a8a8a"/>
<rect x="742" y="417" width="1" height="1" fill="#8a8a8a"/>
<rect x="766" y="417" width="1" height="1" fill="#8a8a8a"/>
<rect x="790" y="417" width="1" height="1" fill="#8a8a8a"/>
<rect x="814" y="417" width="1" height="1" fill="#8a8a8a"/>
<rect x="838" y="417" width="1" height="1" fill="#8a8a8a"/>
<rect x="862" y="417" width="1" height="1" fill="#8a8a8a"/>
<rect x="886" y="417" width="1" height="1" fill="#8a8a8a"/>
<rect x="910" y="417" width="1" height="1" fill="#8a8a8a"/>
<rect x="934" y="417" width="1" height="1" fill="#8a8a8a"/>
<rect x="958" y="417" width="1" height="1" fill="#8a8a8a"/>
<rect x="982" y="417" width="1" height="1" fill="#8a8a8a"/>
<rect x="1006" y="417" width="1" height="1" fill="#8a8a8a"/>
<rect x="1030" y="417" width="1" height="1" fill="#8a8a8a"/>
<rect x="1054" y="417" width="1" height="1" fill="#8a8a8a"/>
<rect x="1078" y="417" width="1" height="1" fill="#8a8a8a"/>
<rect x="1102" y="417" width="1" height="1" fill="#8a8a8a"/>
<rect x="1126" y="417" width="1" height="1" fill="#8a8a8a"/>
<rect x="1150" y="417" width="1" height="1" fill="#8a8a8a"/>
<rect x="1174" y="417" width="1" height="1" fill="#8a8a8a"/>
<rect x="1198" y="417" width="1" height="1" fill="#8a8a8a"/>
<rect x="1222" y="417" width="1" height="1" fill="#8a8a8a"/>
<rect x="1246" y="417" width="1" height="1" fill="#8a8a8a"/>
<rect x="94" y="600" width="1" height="1" fill="#8a8a8a"/>
<rect x="118" y="600" width="1" height="1" fill="#8a8a8a"/>
<rect x="142" y="600" width="1" height="1" fill="#8a8a8a"/>
<rect x="166" y="600" width="1" height="1" fill="#8a8a8a"/>
<rect x="190" y="600" width="1" height="1" fill="#8a8a8a"/>
<rect x="214" y="600" width="1" height="1" fill="#8a8a8a"/>
<rect x="238" y="600" width="1" height="1" fill="#8a8a8a"/>
<rect x="262" y="600" width="1" height="1" fill="#8a8a8a"/>
<rect x="286" y="600" width="1" height="1" fill="#8a8a8a"/>
<rect x="310" y="600" width="1" height="1" fill="#8a8a8a"/>
<rect x="334" y="600" width="1" height="1" fill="#8a8a8a"/>
<rect x="358" y="600" width="1" height="1" fill="#8a8a8a"/>
<rect x="382" y="600" width="1" height="1" fill="#8a8a8a"/>
<rect x="406" y="600" width="1" height="1" fill="#8a8a8a"/>
<rect x="430" y="600" width="1" height="1" fill="#8a8a8a"/>
<rect x="454" y="600" width="1" height="1" fill="#8a8a8a"/>
<rect x="478" y="600" width="1" height="1" fill="#8a8a8a"/>
<rect x="502" y="600" width="1" height="1" fill="#8a8a8a"/>
<rect x="526" y="600" width="1" height="1" fill="#8a8a8a"/>
<rect x="550" y="600" width="1" height="1" fill="#8a8a8a"/>
<rect x="574" y="600" width="1" height="1" fill="#8a8a8a"/>
<rect x="598" y="600" width="1" height="1" fill="#8a8a8a"/>
<rect x="622" y="600" width="1" height="1" fill="#8a8a8a"/>
<rect x="646" y="600" width="1" height="1" fill="#8a8a8a"/>
<rect x="670" y="600" width="1" height="1" fill="#8a8a8a"/>
<rect x="694" y="600" width="1" height="1" fill="#8a8a8a"/>
<rect x="718" y="600" width="1" height="1" fill="#8a8a8a"/>
<rect x="742" y="600" width="1" height="1" fill="#8a8a8a"/>
<rect x="766" y="600" width="1" height="1" fill="#8a8a8a"/>
<rect x="790" y="600" width="1" height="1" fill="#8a8a8a"/>
<rect x="814" y="600" width="1" height="1" fill="#8a8a8a"/>
<rect x="838" y="600" width="1" height="1" fill="#8a8a8a"/>
<rect x="862" y="600" width="1" height="1" fill="#8a8a8a"/>
<rect x="886" y="600" width="1" height="1" fill="#8a8a8a"/>
<rect x="910" y="600" width="1" height="1" fill="#8a8a8a"/>
<rect x="934" y="600" width="1" height="1" fill="#8a8a8a"/>
<rect x="958" y="600" width="1" height="1" fill="#8a8a8a"/>
<rect x="982" y="600" width="1" height="1" fill="#8a8a8a"/>
<rect x="1006" y="600" width="1" height="1" fill="#8a8a8a"/>
<rect x="1030" y="600" width="1" height="1" fill="#8a8a8a"/>
<rect x="1054" y="600" width="1" height="1" fill="#8a8a8a"/>
<rect x="1078" y="600" width="1" height="1" fill="#8a8a8a"/>
<rect x="1102" y="600" width="1" height="1" fill="#8a8a8a"/>
<rect x="1126" y="600" width="1" height="1" fill="#8a8a8a"/>
<rect x="1150" y="600" width="1" height="1" fill="#8a8a8a"/>
<rect x="1174" y="600" width="1" height="1" fill="#8a8a8a"/>
<rect x="1198" y="600" width="1" height="1" fill="#8a8a8a"/>
<rect x="1222" y="600" width="1" height="1" fill="#8a8a8a"/>
<rect x="1246" y="600" width="1" height="1" fill="#8a8a8a"/>
<rect x="670" y="363" width="1" height="291" fill="#7a7a7a"/>
<rect x="668" y="370" width="5" height="1" fill="#7a7a7a"/>
<rect x="668" y="378" width="5" height="1" fill="#7a7a7a"/>
<rect x="668" y="385" width="5" height="1" fill="#7a7a7a"/>
<rect x="668" y="392" width="5" height="1" fill="#7a7a7a"/>
<rect x="668" y="399" width="5" height="1" fill="#7a7a7a"/>
<rect x="668" y="407" width="5" height="1" fill="#7a7a7a"/>
<rect x="668" y="414" width="5" height="1" fill="#7a7a7a"/>
<rect x="668" y="421" width="5" height="1" fill="#7a7a7a"/>
<rect x="668" y="428" width="5" height="1" fill="#7a7a7a"/>
<rect x="668" y="436" width="5" height="1" fill="#7a7a7a"/>
<rect x="668" y="443" width="5" height="1" fill="#7a7a7a"/>
<rect x="668" y="450" width="5" height="1" fill="#7a7a7a"/>
<rect x="668" y="458" width="5" height="1" fill="#7a7a7a"/>
<rect x="668" y="465" width="5" height="1" fill="#7a7a7a"/>
<rect x="668" y="472" width="5" height="1" fill="#7a7a7a"/>
<rect x="668" y="479" width="5" height="1" fill="#7a7a7a"/>
<rect x="668" y="487" width="5" height="1" fill="#7a7a7a"/>
<rect x="668" y="494" width="5" height="1" fill="#7a7a7a"/>
<rect x="668" y="501" width="5" height="1" fill="#7a7a7a"/>
<rect x="668" y="509" width="5" height="1" fill="#7a7a7a"/>
<rect x="668" y="516" width="5" height="1" fill="#7a7a7a"/>
<rect x="668" y="523" width="5" height="1" fill="#7a7a7a"/>
<rect x="668" y="530" width="5" height="1" fill="#7a7a7a"/>
<rect x="668" y="538" width="5" height="1" fill="#7a7a7a"/>
<rect x="668" y="545" width="5" height="1" fill="#7a7a7a"/>
<rect x="668" y="552" width="5" height="1" fill="#7a7a7a"/>
<rect x="668" y="559" width="5" height="1" fill="#7a7a7a"/>
<rect x="668" y="567" width="5" height="1" fill="#7a7a7a"/>
<rect x="668" y="574" width="5" height="1" fill="#7a7a7a"/>
<rect x="668" y="581" width="5" height="1" fill="#7a7a7a"/>
<rect x="668" y="589" width="5" height="1" fill="#7a7a7a"/>
<rect x="668" y="596" width="5" height="1" fill="#7a7a7a"/>
<rect x="668" y="603" width="5" height="1" fill="#7a7a7a"/>
<rect x="668" y="610" width="5" height="1" fill="#7a7a7a"/>
<rect x="668" y="618" width="5" height="1" fill="#7a7a7a"/>
<rect x="668" y="625" width="5" height="1" fill="#7a7a7a"/>
<rect x="668" y="632" width="5" height="1" fill="#7a7a7a"/>
<rect x="668" y="639" width="5" height="1" fill="#7a7a7a"/>
<rect x="668" y="647" width="5" height="1" fill="#7a7a7a"/>
<rect x="70" y="509" width="1200" height="1" fill="#7a7a7a"/>
<rect x="94" y="507" width="1" height="5" fill="#7a7a7a"/>
<rect x="118" y="507" width="1" height="5" fill="#7a7a7a"/>
<rect x="142" y="507" width="1" height="5" fill="#7a7a7a"/>
<rect x="166" y="507" width="1" height="5" fill="#7a7a7a"/>
<rect x="190" y="507" width="1" height="5" fill="#7a7a7a"/>
<rect x="214" y="507" width="1" height="5" fill="#7a7a7a"/>
<rect x="238" y="507" width="1" height="5" fill="#7a7a7a"/>
<rect x="262" y="507" width="1" height="5" fill="#7a7a7a"/>
<rect x="286" y="507" width="1" height="5" fill="#7a7a7a"/>
<rect x="310" y="507" width="1" height="5" fill="#7a7a7a"/>
<rect x="334" y="507" width="1" height="5" fill="#7a7a7a"/>
<rect x="358" y="507" width="1" height="5" fill="#7a7a7a"/>
<rect x="382" y="507" width="1" height="5" fill="#7a7a7a"/>
<rect x="406" y="507" width="1" height="5" fill="#7a7a7a"/>
<rect x="430" y="507" width="1" height="5" fill="#7a7a7a"/>
<rect x="454" y="507" width="1" height="5" fill="#7a7a7a"/>
<rect x="478" y="507" width="1" height="5" fill="#7a7a7a"/>
<rect x="502" y="507" width="1" height="5" fill="#7a7a7a"/>
<rect x="526" y="507" width="1" height="5" fill="#7a7a7a"/>
<rect x="550" y="507" width="1" height="5" fill="#7a7a7a"/>
<rect x="574" y="507" width="1" height="5" fill="#7a7a7a"/>
<rect x="598" y="507" width="1" height="5" fill="#7a7a7a"/>
<rect x="622" y="507" width="1" height="5" fill="#7a7a7a"/>
<rect x="646" y="507" width="1" height="5" fill="#7a7a7a"/>
<rect x="670" y="507" width="1" height="5" fill="#7a7a7a"/>
<rect x="694" y="507" width="1" height="5" fill="#7a7a7a"/>
<rect x="718" y="507" width="1" height="5" fill="#7a7a7a"/>
<rect x="742" y="507" width="1" height="5" fill="#7a7a7a"/>
<rect x="766" y="507" width="1" height="5" fill="#7a7a7a"/>
<rect x="790" y="507" width="1" height="5" fill="#7a7a7a"/>
<rect x="814" y="507" width="1" height="5" fill="#7a7a7a"/>
<rect x="838" y="507" width="1" height="5" fill="#7a7a7a"/>
<rect x="862" y="507" width="1" height="5" fill="#7a7a7a"/>
<rect x="886" y="507" width="1" height="5" fill="#7a7a7a"/>
<rect x="910" y="507" width="1" height="5" fill="#7a7a7a"/>
<rect x="934" y="507" width="1" height="5" fill="#7a7a7a"/>
<rect x="958" y="507" width="1" height="5" fill="#7a7a7a"/>
<rect x="982" y="507" width="1" height="5" fill="#7a7a7a"/>
<rect x="1006" y="507" width="1" height="5" fill="#7a7a7a"/>
<rect x="1030" y="507" width="1" height="5" fill="#7a7a7a"/>
<rect x="1054" y="507" width="1" height="5" fill="#7a7a7a"/>
<rect x="1078" y="507" width="1" height="5" fill="#7a7a7a"/>
<rect x="1102" y="507" width="1" height="5" fill="#7a7a7a"/>
<rect x="1126" y="507" width="1" height="5" fill="#7a7a7a"/>
<rect x="1150" y="507" width="1" height="5" fill="#7a7a7a"/>
<rect x="1174" y="507" width="1" height="5" fill="#7a7a7a"/>
<rect x="1198" y="507" width="1" height="5" fill="#7a7a7a"/>
<rect x="1222" y="507" width="1" height="5" fill="#7a7a7a"/>
<rect x="1246" y="507" width="1" height="5" fill="#7a7a7a"/>
<rect x="70.5" y="363.5" width="1199" height="291" fill="none" stroke="#848484" stroke-width="1"/>
<rect x="70" y="497" width="1200" height="1" fill="#ff0a8c"/>
<rect x="71" y="397" width="1" height="101" fill="#ff0a8c"/>
<rect x="72" y="473" width="1" height="25" fill="#ff0a8c"/>
<rect x="83" y="412" width="1" height="86" fill="#ff0a8c"/>
<rect x="82" y="413" width="1" height="85" fill="#ff0a8c"/>
<rect x="95" y="399" width="1" height="99" fill="#ff0a8c"/>
<rect x="95" y="498" width="1" height="2" fill="#ff0a8c"/>
<rect x="107" y="385" width="1" height="113" fill="#ff0a8c"/>
<rect x="119" y="410" width="1" height="88" fill="#ff0a8c"/>
<rect x="118" y="411" width="1" height="87" fill="#ff0a8c"/>
<rect x="119" y="498" width="1" height="2" fill="#ff0a8c"/>
<rect x="132" y="400" width="1" height="98" fill="#ff0a8c"/>
<rect x="133" y="423" width="1" height="75" fill="#ff0a8c"/>
<rect x="132" y="498" width="1" height="2" fill="#ff0a8c"/>
<rect x="144" y="406" width="1" height="92" fill="#ff0a8c"/>
<rect x="156" y="392" width="1" height="106" fill="#ff0a8c"/>
<rect x="157" y="447" width="1" height="51" fill="#ff0a8c"/>
<rect x="168" y="394" width="1" height="104" fill="#ff0a8c"/>
<rect x="167" y="395" width="1" height="103" fill="#ff0a8c"/>
<rect x="181" y="408" width="1" height="90" fill="#ff0a8c"/>
<rect x="182" y="414" width="1" height="84" fill="#ff0a8c"/>
<rect x="193" y="386" width="1" height="112" fill="#ff0a8c"/>
<rect x="194" y="395" width="1" height="103" fill="#ff0a8c"/>
<rect x="193" y="498" width="1" height="2" fill="#ff0a8c"/>
<rect x="205" y="397" width="1" height="101" fill="#ff0a8c"/>
<rect x="206" y="405" width="1" height="93" fill="#ff0a8c"/>
<rect x="217" y="401" width="1" height="97" fill="#ff0a8c"/>
<rect x="218" y="481" width="1" height="17" fill="#ff0a8c"/>
<rect x="230" y="398" width="1" height="100" fill="#ff0a8c"/>
<rect x="231" y="484" width="1" height="14" fill="#ff0a8c"/>
<rect x="230" y="498" width="1" height="2" fill="#ff0a8c"/>
<rect x="242" y="400" width="1" height="98" fill="#ff0a8c"/>
<rect x="243" y="415" width="1" height="83" fill="#ff0a8c"/>
<rect x="254" y="402" width="1" height="96" fill="#ff0a8c"/>
<rect x="255" y="477" width="1" height="21" fill="#ff0a8c"/>
<rect x="267" y="401" width="1" height="97" fill="#ff0a8c"/>
<rect x="279" y="388" width="1" height="110" fill="#ff0a8c"/>
<rect x="280" y="422" width="1" height="76" fill="#ff0a8c"/>
<rect x="291" y="409" width="1" height="89" fill="#ff0a8c"/>
<rect x="292" y="486" width="1" height="12" fill="#ff0a8c"/>
<rect x="304" y="398" width="1" height="100" fill="#ff0a8c"/>
<rect x="305" y="440" width="1" height="58" fill="#ff0a8c"/>
<rect x="304" y="498" width="1" height="2" fill="#ff0a8c"/>
<rect x="316" y="389" width="1" height="109" fill="#ff0a8c"/>
<rect x="328" y="387" width="1" height="111" fill="#ff0a8c"/>
<rect x="329" y="418" width="1" height="80" fill="#ff0a8c"/>
<rect x="341" y="385" width="1" height="113" fill="#ff0a8c"/>
<rect x="342" y="438" width="1" height="60" fill="#ff0a8c"/>
<rect x="353" y="389" width="1" height="109" fill="#ff0a8c"/>
<rect x="354" y="403" width="1" height="95" fill="#ff0a8c"/>
<rect x="366" y="400" width="1" height="98" fill="#ff0a8c"/>
<rect x="367" y="439" width="1" height="59" fill="#ff0a8c"/>
<rect x="366" y="498" width="1" height="2" fill="#ff0a8c"/>
<rect x="378" y="402" width="1" height="96" fill="#ff0a8c"/>
<rect x="379" y="408" width="1" height="90" fill="#ff0a8c"/>
<rect x="391" y="401" width="1" height="97" fill="#ff0a8c"/>
<rect x="390" y="402" width="1" height="96" fill="#ff0a8c"/>
<rect x="391" y="498" width="1" height="2" fill="#ff0a8c"/>
<rect x="403" y="386" width="1" height="112" fill="#ff0a8c"/>
<rect x="404" y="403" width="1" height="95" fill="#ff0a8c"/>
<rect x="403" y="498" width="1" height="2" fill="#ff0a8c"/>
<rect x="415" y="400" width="1" height="98" fill="#ff0a8c"/>
<rect x="416" y="467" width="1" height="31" fill="#ff0a8c"/>
<rect x="415" y="498" width="1" height="2" fill="#ff0a8c"/>
<rect x="428" y="383" width="1" height="115" fill="#ff0a8c"/>
<rect x="429" y="445" width="1" height="53" fill="#ff0a8c"/>
<rect x="440" y="398" width="1" height="100" fill="#ff0a8c"/>
<rect x="453" y="407" width="1" height="91" fill="#ff0a8c"/>
<rect x="454" y="461" width="1" height="37" fill="#ff0a8c"/>
<rect x="453" y="498" width="1" height="2" fill="#ff0a8c"/>
<rect x="465" y="402" width="1" height="96" fill="#ff0a8c"/>
<rect x="466" y="434" width="1" height="64" fill="#ff0a8c"/>
<rect x="465" y="498" width="1" height="2" fill="#ff0a8c"/>
<rect x="478" y="402" width="1" height="96" fill="#ff0a8c"/>
<rect x="490" y="395" width="1" height="103" fill="#ff0a8c"/>
<rect x="491" y="402" width="1" height="96" fill="#ff0a8c"/>
<rect x="490" y="498" width="1" height="2" fill="#ff0a8c"/>
<rect x="502" y="386" width="1" height="112" fill="#ff0a8c"/>
<rect x="503" y="468" width="1" height="30" fill="#ff0a8c"/>
<rect x="515" y="400" width="1" height="98" fill="#ff0a8c"/>
<rect x="516" y="423" width="1" height="75" fill="#ff0a8c"/>
<rect x="515" y="498" width="1" height="2" fill="#ff0a8c"/>
<rect x="527" y="396" width="1" height="102" fill="#ff0a8c"/>
<rect x="528" y="479" width="1" height="19" fill="#ff0a8c"/>
<rect x="527" y="498" width="1" height="2" fill="#ff0a8c"/>
<rect x="539" y="388" width="1" height="110" fill="#ff0a8c"/>
<rect x="540" y="402" width="1" height="96" fill="#ff0a8c"/>
<rect x="539" y="498" width="1" height="2" fill="#ff0a8c"/>
<rect x="552" y="394" width="1" height="104" fill="#ff0a8c"/>
<rect x="553" y="480" width="1" height="18" fill="#ff0a8c"/>
<rect x="552" y="498" width="1" height="2" fill="#ff0a8c"/>
<rect x="564" y="394" width="1" height="104" fill="#ff0a8c"/>
<rect x="563" y="395" width="1" height="103" fill="#ff0a8c"/>
<rect x="564" y="498" width="1" height="2" fill="#ff0a8c"/>
<rect x="576" y="394" width="1" height="104" fill="#ff0a8c"/>
<rect x="577" y="474" width="1" height="24" fill="#ff0a8c"/>
<rect x="588" y="395" width="1" height="103" fill="#ff0a8c"/>
<rect x="589" y="449" width="1" height="49" fill="#ff0a8c"/>
<rect x="588" y="498" width="1" height="2" fill="#ff0a8c"/>
<rect x="601" y="405" width="1" height="93" fill="#ff0a8c"/>
<rect x="602" y="439" width="1" height="59" fill="#ff0a8c"/>
<rect x="613" y="389" width="1" height="109" fill="#ff0a8c"/>
<rect x="614" y="418" width="1" height="80" fill="#ff0a8c"/>
<rect x="613" y="498" width="1" height="2" fill="#ff0a8c"/>
<rect x="838" y="392" width="1" height="106" fill="#ff0a8c"/>
<rect x="837" y="393" width="1" height="105" fill="#ff0a8c"/>
<rect x="845" y="379" width="1" height="119" fill="#ff0a8c"/>
<rect x="844" y="380" width="1" height="118" fill="#ff0a8c"/>
<rect x="845" y="498" width="1" height="2" fill="#ff0a8c"/>
<rect x="851" y="399" width="1" height="99" fill="#ff0a8c"/>
<rect x="852" y="414" width="1" height="84" fill="#ff0a8c"/>
<rect x="857" y="383" width="1" height="115" fill="#ff0a8c"/>
<rect x="858" y="392" width="1" height="106" fill="#ff0a8c"/>
<rect x="863" y="390" width="1" height="108" fill="#ff0a8c"/>
<rect x="864" y="489" width="1" height="9" fill="#ff0a8c"/>
<rect x="869" y="389" width="1" height="109" fill="#ff0a8c"/>
<rect x="870" y="470" width="1" height="28" fill="#ff0a8c"/>
<rect x="875" y="380" width="1" height="118" fill="#ff0a8c"/>
<rect x="876" y="477" width="1" height="21" fill="#ff0a8c"/>
<rect x="881" y="397" width="1" height="101" fill="#ff0a8c"/>
<rect x="882" y="463" width="1" height="35" fill="#ff0a8c"/>
<rect x="887" y="383" width="1" height="115" fill="#ff0a8c"/>
<rect x="893" y="381" width="1" height="117" fill="#ff0a8c"/>
<rect x="894" y="412" width="1" height="86" fill="#ff0a8c"/>
<rect x="899" y="386" width="1" height="112" fill="#ff0a8c"/>
<rect x="900" y="443" width="1" height="55" fill="#ff0a8c"/>
<rect x="905" y="381" width="1" height="117" fill="#ff0a8c"/>
<rect x="906" y="408" width="1" height="90" fill="#ff0a8c"/>
<rect x="905" y="498" width="1" height="2" fill="#ff0a8c"/>
<rect x="911" y="397" width="1" height="101" fill="#ff0a8c"/>
<rect x="912" y="418" width="1" height="80" fill="#ff0a8c"/>
<rect x="911" y="498" width="1" height="2" fill="#ff0a8c"/>
<rect x="917" y="389" width="1" height="109" fill="#ff0a8c"/>
<rect x="918" y="451" width="1" height="47" fill="#ff0a8c"/>
<rect x="923" y="381" width="1" height="117" fill="#ff0a8c"/>
<rect x="922" y="382" width="1" height="116" fill="#ff0a8c"/>
<rect x="1051" y="383" width="1" height="115" fill="#ff0a8c"/>
<rect x="1052" y="405" width="1" height="93" fill="#ff0a8c"/>
<rect x="1057" y="380" width="1" height="118" fill="#ff0a8c"/>
<rect x="1063" y="393" width="1" height="105" fill="#ff0a8c"/>
<rect x="1064" y="437" width="1" height="61" fill="#ff0a8c"/>
<rect x="1069" y="379" width="1" height="119" fill="#ff0a8c"/>
<rect x="1070" y="465" width="1" height="33" fill="#ff0a8c"/>
<rect x="1069" y="498" width="1" height="2" fill="#ff0a8c"/>
<rect x="1075" y="400" width="1" height="98" fill="#ff0a8c"/>
<rect x="1076" y="444" width="1" height="54" fill="#ff0a8c"/>
<rect x="1075" y="498" width="1" height="2" fill="#ff0a8c"/>
<rect x="1081" y="384" width="1" height="114" fill="#ff0a8c"/>
<rect x="1081" y="498" width="1" height="2" fill="#ff0a8c"/>
<rect x="1087" y="382" width="1" height="116" fill="#ff0a8c"/>
<rect x="1088" y="481" width="1" height="17" fill="#ff0a8c"/>
<rect x="1087" y="498" width="1" height="2" fill="#ff0a8c"/>
<rect x="1093" y="395" width="1" height="103" fill="#ff0a8c"/>
<rect x="1099" y="381" width="1" height="117" fill="#ff0a8c"/>
<rect x="1100" y="429" width="1" height="69" fill="#ff0a8c"/>
<rect x="1099" y="498" width="1" height="2" fill="#ff0a8c"/>
<rect x="1105" y="393" width="1" height="105" fill="#ff0a8c"/>
<rect x="1104" y="394" width="1" height="104" fill="#ff0a8c"/>
<rect x="1111" y="389" width="1" height="109" fill="#ff0a8c"/>
<rect x="1117" y="380" width="1" height="118" fill="#ff0a8c"/>
<rect x="1116" y="381" width="1" height="117" fill="#ff0a8c"/>
<rect x="1123" y="397" width="1" height="101" fill="#ff0a8c"/>
<rect x="1124" y="481" width="1" height="17" fill="#ff0a8c"/>
<rect x="1129" y="382" width="1" height="116" fill="#ff0a8c"/>
<rect x="1130" y="388" width="1" height="110" fill="#ff0a8c"/>
<rect x="1136" y="382" width="1" height="116" fill="#ff0a8c"/>
<rect x="1137" y="468" width="1" height="30" fill="#ff0a8c"/>
<rect x="1136" y="498" width="1" height="2" fill="#ff0a8c"/>
<rect x="1263" y="382" width="1" height="116" fill="#ff0a8c"/>
<rect x="1264" y="440" width="1" height="58" fill="#ff0a8c"/>
<rect x="1268" y="395" width="1" height="103" fill="#ff0a8c"/>
<rect x="1269" y="488" width="1" height="10" fill="#ff0a8c"/>
<polyline points="70,597.5 71,597.5 72,597.5 73,597.5 74,597.5 75,597.5 76,597.5 77,597.5 78,597.5 79,597.5 80,597.5 81,597.5 82,597.5 83,597.5 84,597.5 85,597.5 86,597.5 87,597.5 88,597.5 89,597.5 90,597.5 91,597.5 92,597.5 93,597.5 94,597.5 95,597.5 96,597.5 97,597.5 98,597.5 99,597.5 100,597.5 101,597.5 102,597.5 103,597.5 104,597.5 105,597.5 106,597.5 107,597.5 108,597.5 109,597.5 110,597.5 111,597.5 112,597.5 113,596.5 114,596.5 115,596.5 116,596.5 117,596.5 118,596.5 119,597.5 120,597.5 121,597.5 122,597.5 123,597.5 124,597.5 125,597.5 126,597.5 127,597.5 128,597.5 129,597.5 130,597.5 131,597.5 132,597.5 133,597.5 134,597.5 135,597.5 136,597.5 137,597.5 138,597.5 139,597.5 140,597.5 141,597.5 142,597.5 143,597.5 144,597.5 145,597.5 146,597.5 147,597.5 148,597.5 149,597.5 150,597.5 151,597.5 152,597.5 153,598.5 154,598.5 155,598.5 156,598.5 157,597.5 158,597.5 159,597.5 160,597.5 161,597.5 162,597.5 163,597.5 164,597.5 165,597.5 166,597.5 167,597.5 168,597.5 169,597.5 170,597.5 171,597.5 172,597.5 173,597.5 174,597.5 175,598.5 176,598.5 177,598.5 178,598.5 179,598.5 180,598.5 181,598.5 182,598.5 183,598.5 184,597.5 185,597.5 186,597.5 187,597.5 188,597.5 189,597.5 190,597.5 191,597.5 192,597.5 193,597.5 194,597.5 195,597.5 196,597.5 197,597.5 198,597.5 199,597.5 200,597.5 201,597.5 202,597.5 203,597.5 204,597.5 205,597.5 206,598.5 207,598.5 208,598.5 209,598.5 210,598.5 211,598.5 212,598.5 213,597.5 214,597.5 215,597.5 216,597.5 217,597.5 218,597.5 219,597.5 220,597.5 221,597.5 222,597.5 223,597.5 224,597.5 225,597.5 226,597.5 227,596.5 228,596.5 229,596.5 230,596.5 231,596.5 232,596.5 233,596.5 234,596.5 235,596.5 236,597.5 237,597.5 238,597.5 239,597.5 240,597.5 241,597.5 242,597.5 243,597.5 244,597.5 245,597.5 246,597.5 247,597.5 248,597.5 249,597.5 250,597.5 251,597.5 252,597.5 253,597.5 254,597.5 255,597.5 256,597.5 257,597.5 258,597.5 259,597.5 260,597.5 261,597.5 262,597.5 263,597.5 264,597.5 265,597.5 266,597.5 267,597.5 268,597.5 269,597.5 270,597.5 271,597.5 272,597.5 273,597.5 274,597.5 275,597.5 276,597.5 277,597.5 278,597.5 279,597.5 280,597.5 281,597.5 282,597.5 283,597.5 284,597.5 285,597.5 286,597.5 287,597.5 288,597.5 289,597.5 290,597.5 291,597.5 292,597.5 293,597.5 294,597.5 295,597.5 296,597.5 297,597.5 298,596.5 299,596.5 300,596.5 301,596.5 302,596.5 303,596.5 304,596.5 305,596.5 306,597.5 307,597.5 308,597.5 309,597.5 310,597.5 311,597.5 312,597.5 313,597.5 314,597.5 315,597.5 316,597.5 317,597.5 318,597.5 319,597.5 320,597.5 321,597.5 322,597.5 323,597.5 324,597.5 325,597.5 326,597.5 327,597.5 328,597.5 329,597.5 330,597.5 331,597.5 332,597.5 333,597.5 334,597.5 335,597.5 336,597.5 337,597.5 338,597.5 339,597.5 340,597.5 341,597.5 342,597.5 343,597.5 344,597.5 345,597.5 346,597.5 347,597.5 348,597.5 349,597.5 350,597.5 351,597.5 352,597.5 353,597.5 354,597.5 355,597.5 356,597.5 357,597.5 358,597.5 359,597.5 360,597.5 361,597.5 362,597.5 363,597.5 364,597.5 365,597.5 366,597.5 367,597.5 368,597.5 369,597.5 370,597.5 371,597.5 372,597.5 373,597.5 374,597.5 375,597.5 376,597.5 377,597.5 378,597.5 379,597.5 380,597.5 381,597.5 382,597.5 383,597.5 384,597.5 385,597.5 386,597.5 387,597.5 388,597.5 389,597.5 390,597.5 391,597.5 392,597.5 393,597.5 394,597.5 395,597.5 396,597.5 397,597.5 398,597.5 399,597.5 400,597.5 401,597.5 402,597.5 403,597.5 404,597.5 405,597.5 406,597.5 407,597.5 408,597.5 409,597.5 410,597.5 411,597.5 412,597.5 413,597.5 414,597.5 415,597.5 416,597.5 417,597.5 418,597.5 419,597.5 420,597.5 421,597.5 422,597.5 423,598.5 424,598.5 425,598.5 426,598.5 427,598.5 428,597.5 429,597.5 430,597.5 431,597.5 432,597.5 433,597.5 434,597.5 435,597.5 436,597.5 437,597.5 438,597.5 439,597.5 440,597.5 441,597.5 442,597.5 443,597.5 444,597.5 445,597.5 446,597.5 447,597.5 448,597.5 449,597.5 450,597.5 451,597.5 452,597.5 453,597.5 454,597.5 455,597.5 456,597.5 457,597.5 458,597.5 459,597.5 460,597.5 461,597.5 462,597.5 463,597.5 464,597.5 465,597.5 466,597.5 467,597.5 468,597.5 469,597.5 470,597.5 471,597.5 472,597.5 473,598.5 474,598.5 475,598.5 476,597.5 477,597.5 478,597.5 479,597.5 480,597.5 481,597.5 482,597.5 483,597.5 484,597.5 485,597.5 486,597.5 487,597.5 488,597.5 489,597.5 490,597.5 491,597.5 492,597.5 493,597.5 494,597.5 495,597.5 496,597.5 497,597.5 498,597.5 499,597.5 500,597.5 501,597.5 502,597.5 503,597.5 504,597.5 505,597.5 506,597.5 507,597.5 508,597.5 509,597.5 510,597.5 511,597.5 512,597.5 513,597.5 514,597.5 515,597.5 516,597.5 517,597.5 518,597.5 519,597.5 520,597.5 521,597.5 522,597.5 523,597.5 524,597.5 525,597.5 526,597.5 527,597.5 528,597.5 529,597.5 530,597.5 531,597.5 532,597.5 533,597.5 534,597.5 535,597.5 536,597.5 537,597.5 538,597.5 539,597.5 540,597.5 541,597.5 542,597.5 543,597.5 544,597.5 545,597.5 546,597.5 547,597.5 548,597.5 549,597.5 550,597.5 551,597.5 552,597.5 553,597.5 554,597.5 555,597.5 556,597.5 557,598.5 558,598.5 559,598.5 560,598.5 561,597.5 562,597.5 563,597.5 564,597.5 565,597.5 566,597.5 567,597.5 568,597.5 569,597.5 570,597.5 571,597.5 572,597.5 573,597.5 574,597.5 575,597.5 576,597.5 577,597.5 578,597.5 579,597.5 580,597.5 581,597.5 582,597.5 583,597.5 584,597.5 585,597.5 586,597.5 587,597.5 588,597.5 589,597.5 590,597.5 591,597.5 592,597.5 593,597.5 594,597.5 595,597.5 596,597.5 597,597.5 598,597.5 599,597.5 600,597.5 601,597.5 602,597.5 603,597.5 604,597.5 605,597.5 606,597.5 607,597.5 608,597.5 609,597.5 610,597.5 611,597.5 612,597.5 613,597.5 614,597.5 615,597.5 616,597.5 617,597.5 618,597.5 619,597.5 620,597.5 621,597.5 622,597.5 623,597.5 624,597.5 625,597.5 626,597.5 627,597.5 628,597.5 629,597.5 630,597.5 631,597.5 632,598.5 633,598.5 634,598.5 635,598.5 636,598.5 637,598.5 638,597.5 639,596.5 640,596.5 641,596.5 642,596.5 643,596.5 644,596.5 645,596.5 646,595.5 647,595.5 648,595.5 649,595.5 650,595.5 651,594.5 652,594.5 653,594.5 654,594.5 655,594.5 656,594.5 657,593.5 658,593.5 659,593.5 660,593.5 661,593.5 662,593.5 663,592.5 664,592.5 665,592.5 666,592.5 667,592.5 668,591.5 669,591.5 670,591.5 671,591.5 672,590.5 673,590.5 674,590.5 675,590.5 676,589.5 677,589.5 678,589.5 679,589.5 680,588.5 681,588.5 682,588.5 683,588.5 684,588.5 685,587.5 686,587.5 687,587.5 688,586.5 689,586.5 690,586.5 691,586.5 692,586.5 693,585.5 694,585.5 695,585.5 696,584.5 697,584.5 698,584.5 699,584.5 700,584.5 701,583.5 702,583.5 703,583.5 704,582.5 705,582.5 706,582.5 707,582.5 708,582.5 709,581.5 710,581.5 711,581.5 712,580.5 713,580.5 714,580.5 715,580.5 716,580.5 717,579.5 718,579.5 719,579.5 720,578.5 721,578.5 722,578.5 723,578.5 724,578.5 725,577.5 726,577.5 727,577.5 728,576.5 729,576.5 730,576.5 731,576.5 732,576.5 733,575.5 734,575.5 735,575.5 736,574.5 737,574.5 738,574.5 739,574.5 740,574.5 741,573.5 742,573.5 743,573.5 744,572.5 745,572.5 746,572.5 747,572.5 748,572.5 749,571.5 750,571.5 751,571.5 752,570.5 753,570.5 754,570.5 755,570.5 756,570.5 757,569.5 758,569.5 759,569.5 760,568.5 761,568.5 762,568.5 763,568.5 764,568.5 765,567.5 766,567.5 767,567.5 768,566.5 769,566.5 770,566.5 771,566.5 772,566.5 773,565.5 774,565.5 775,565.5 776,564.5 777,564.5 778,564.5 779,564.5 780,564.5 781,563.5 782,563.5 783,563.5 784,563.5 785,562.5 786,562.5 787,562.5 788,562.5 789,561.5 790,561.5 791,561.5 792,561.5 793,560.5 794,560.5 795,560.5 796,560.5 797,560.5 798,559.5 799,559.5 800,559.5 801,559.5 802,559.5 803,558.5 804,558.5 805,558.5 806,558.5 807,558.5 808,557.5 809,557.5 810,557.5 811,557.5 812,557.5 813,556.5 814,556.5 815,556.5 816,556.5 817,556.5 818,555.5 819,555.5 820,555.5 821,555.5 822,555.5 823,554.5 824,554.5 825,554.5 826,554.5 827,554.5 828,553.5 829,553.5 830,553.5 831,553.5 832,553.5 833,552.5 834,552.5 835,552.5 836,552.5 837,552.5 838,551.5 839,551.5 840,551.5 841,551.5 842,551.5 843,551.5 844,550.5 845,550.5 846,550.5 847,550.5 848,550.5 849,550.5 850,550.5 851,550.5 852,550.5 853,550.5 854,550.5 855,550.5 856,550.5 857,550.5 858,550.5 859,550.5 860,550.5 861,550.5 862,550.5 863,550.5 864,550.5 865,550.5 866,550.5 867,550.5 868,550.5 869,550.5 870,550.5 871,551.5 872,551.5 873,551.5 874,551.5 875,551.5 876,552.5 877,552.5 878,552.5 879,552.5 880,552.5 881,553.5 882,553.5 883,553.5 884,553.5 885,553.5 886,554.5 887,554.5 888,554.5 889,554.5 890,554.5 891,555.5 892,555.5 893,555.5 894,555.5 895,555.5 896,556.5 897,556.5 898,556.5 899,556.5 900,557.5 901,557.5 902,557.5 903,557.5 904,558.5 905,558.5 906,558.5 907,559.5 908,559.5 909,559.5 910,560.5 911,560.5 912,560.5 913,561.5 914,561.5 915,561.5 916,561.5 917,562.5 918,562.5 919,562.5 920,563.5 921,563.5 922,563.5 923,564.5 924,564.5 925,564.5 926,565.5 927,565.5 928,565.5 929,565.5 930,566.5 931,566.5 932,566.5 933,566.5 934,566.5 935,567.5 936,567.5 937,567.5 938,567.5 939,567.5 940,567.5 941,567.5 942,567.5 943,567.5 944,567.5 945,567.5 946,567.5 947,567.5 948,567.5 949,567.5 950,567.5 951,567.5 952,567.5 953,567.5 954,567.5 955,567.5 956,567.5 957,567.5 958,567.5 959,567.5 960,567.5 961,567.5 962,567.5 963,567.5 964,566.5 965,566.5 966,566.5 967,566.5 968,566.5 969,566.5 970,565.5 971,565.5 972,565.5 973,565.5 974,565.5 975,564.5 976,564.5 977,564.5 978,564.5 979,564.5 980,563.5 981,563.5 982,563.5 983,563.5 984,563.5 985,562.5 986,562.5 987,562.5 988,562.5 989,562.5 990,561.5 991,561.5 992,561.5 993,561.5 994,560.5 995,560.5 996,560.5 997,560.5 998,560.5 999,559.5 1000,559.5 1001,559.5 1002,559.5 1003,559.5 1004,558.5 1005,558.5 1006,558.5 1007,558.5 1008,558.5 1009,557.5 1010,557.5 1011,557.5 1012,557.5 1013,557.5 1014,556.5 1015,556.5 1016,556.5 1017,556.5 1018,556.5 1019,555.5 1020,555.5 1021,555.5 1022,555.5 1023,555.5 1024,554.5 1025,554.5 1026,554.5 1027,554.5 1028,554.5 1029,553.5 1030,553.5 1031,553.5 1032,553.5 1033,553.5 1034,552.5 1035,552.5 1036,552.5 1037,552.5 1038,552.5 1039,551.5 1040,551.5 1041,551.5 1042,551.5 1043,551.5 1044,550.5 1045,550.5 1046,550.5 1047,550.5 1048,550.5 1049,549.5 1050,549.5 1051,549.5 1052,549.5 1053,549.5 1054,549.5 1055,549.5 1056,549.5 1057,549.5 1058,549.5 1059,549.5 1060,548.5 1061,548.5 1062,548.5 1063,548.5 1064,548.5 1065,548.5 1066,548.5 1067,549.5 1068,549.5 1069,549.5 1070,549.5 1071,549.5 1072,549.5 1073,549.5 1074,549.5 1075,549.5 1076,549.5 1077,550.5 1078,550.5 1079,550.5 1080,550.5 1081,551.5 1082,551.5 1083,551.5 1084,551.5 1085,552.5 1086,552.5 1087,552.5 1088,552.5 1089,553.5 1090,553.5 1091,553.5 1092,553.5 1093,554.5 1094,554.5 1095,554.5 1096,554.5 1097,555.5 1098,555.5 1099,555.5 1100,555.5 1101,556.5 1102,556.5 1103,556.5 1104,556.5 1105,557.5 1106,557.5 1107,557.5 1108,557.5 1109,558.5 1110,558.5 1111,558.5 1112,559.5 1113,559.5 1114,559.5 1115,559.5 1116,560.5 1117,560.5 1118,560.5 1119,560.5 1120,561.5 1121,561.5 1122,561.5 1123,561.5 1124,562.5 1125,562.5 1126,562.5 1127,562.5 1128,563.5 1129,563.5 1130,563.5 1131,563.5 1132,564.5 1133,564.5 1134,564.5 1135,564.5 1136,565.5 1137,565.5 1138,565.5 1139,565.5 1140,566.5 1141,566.5 1142,566.5 1143,566.5 1144,566.5 1145,567.5 1146,567.5 1147,567.5 1148,567.5 1149,567.5 1150,567.5 1151,567.5 1152,567.5 1153,567.5 1154,567.5 1155,567.5 1156,567.5 1157,567.5 1158,567.5 1159,567.5 1160,567.5 1161,567.5 1162,567.5 1163,567.5 1164,567.5 1165,567.5 1166,567.5 1167,567.5 1168,567.5 1169,567.5 1170,567.5 1171,567.5 1172,567.5 1173,567.5 1174,567.5 1175,567.5 1176,567.5 1177,566.5 1178,566.5 1179,566.5 1180,566.5 1181,566.5 1182,566.5 1183,566.5 1184,565.5 1185,565.5 1186,565.5 1187,565.5 1188,565.5 1189,564.5 1190,564.5 1191,564.5 1192,564.5 1193,564.5 1194,564.5 1195,563.5 1196,563.5 1197,563.5 1198,563.5 1199,563.5 1200,562.5 1201,562.5 1202,562.5 1203,562.5 1204,562.5 1205,562.5 1206,561.5 1207,561.5 1208,561.5 1209,561.5 1210,561.5 1211,561.5 1212,560.5 1213,560.5 1214,560.5 1215,560.5 1216,560.5 1217,559.5 1218,559.5 1219,559.5 1220,559.5 1221,559.5 1222,559.5 1223,558.5 1224,558.5 1225,558.5 1226,558.5 1227,558.5 1228,557.5 1229,557.5 1230,557.5 1231,557.5 1232,557.5 1233,557.5 1234,556.5 1235,556.5 1236,556.5 1237,556.5 1238,556.5 1239,555.5 1240,555.5 1241,555.5 1242,555.5 1243,555.5 1244,555.5 1245,554.5 1246,554.5 1247,554.5 1248,554.5 1249,554.5 1250,554.5 1251,553.5 1252,553.5 1253,553.5 1254,553.5 1255,553.5 1256,552.5 1257,552.5 1258,552.5 1259,552.5 1260,552.5 1261,552.5 1262,551.5 1263,551.5 1264,551.5 1265,551.5 1266,551.5 1267,550.5 1268,550.5 1269,550.5" fill="none" stroke="#ffff00" stroke-width="1.6"/>
<line x1="626" y1="363" x2="626" y2="640" stroke="#fff" stroke-width="2" stroke-dasharray="9 6 3 6"/>
<line x1="840" y1="363" x2="840" y2="640" stroke="#fff" stroke-width="2" stroke-dasharray="18 6"/>
<rect x="624" y="450" width="3" height="18" fill="#fff"/>
<polygon points="620,459 631.5,459 625.5,464.5" fill="#fff"/>
<rect x="624" y="581" width="3" height="18" fill="#fff"/>
<polygon points="620,590 631.5,590 625.5,595.5" fill="#fff"/>
<rect x="839" y="497" width="3" height="22" fill="#fff"/>
<polygon points="834,502 845,502 839.5,496.5" fill="#fff"/>
<rect x="839" y="550" width="3" height="22" fill="#fff"/>
<polygon points="834,555 845,555 839.5,549.5" fill="#fff"/>
<text x="626" y="652" font-size="10" text-anchor="middle" fill="#fff" font-family="Liberation Sans">Z2</text>
<text x="840" y="652" font-size="10" text-anchor="middle" fill="#fff" font-family="Liberation Sans">Z2</text>
<rect x="55" y="484" width="15" height="11" rx="2" fill="#ff0a8c"/>
<text x="62.5" y="493" font-size="10" text-anchor="middle" fill="#000" font-family="Liberation Sans">Z2</text>
<rect x="60" y="497" width="10" height="1.5" fill="#ff0a8c"/>
<text x="63" y="627" font-size="10" text-anchor="middle" fill="#ffff00" font-family="Liberation Sans">Z1</text>
<rect x="60" y="630" width="10" height="2" fill="#ffff00"/>
</svg>
<div class="t" style="right:1215px;top:40.0px;color:#ff0a8c;font-size:12px;">20 V</div>
<div class="t" style="right:1215px;top:68.5px;color:#ff0a8c;font-size:12px;">15 V</div>
<div class="t" style="right:1215px;top:104.5px;color:#ff0a8c;font-size:12px;">10 V</div>
<div class="t" style="right:1215px;top:141.5px;color:#ff0a8c;font-size:12px;">5 V</div>
<div class="t" style="right:1215px;top:177.5px;color:#ff0a8c;font-size:12px;">0 V</div>
<div class="t" style="right:1215px;top:214.5px;color:#ff0a8c;font-size:12px;">-5 V</div>
<div class="t" style="right:1215px;top:250.5px;color:#ff0a8c;font-size:12px;">-10 V</div>
<div class="t" style="right:1215px;top:287.5px;color:#ff0a8c;font-size:12px;">-15 V</div>
<div class="t" style="right:1215px;top:317.0px;color:#ff0a8c;font-size:12px;">-20 V</div>
<div class="t" style="right:1215px;top:365.0px;color:#ff0a8c;font-size:12px;">10.08 V</div>
<div class="t" style="right:1215px;top:393.5px;color:#ff0a8c;font-size:12px;">7.33 V</div>
<div class="t" style="right:1215px;top:429.5px;color:#ff0a8c;font-size:12px;">4.58 V</div>
<div class="t" style="right:1215px;top:466.5px;color:#ff0a8c;font-size:12px;">1.83 V</div>
<div class="t" style="right:1215px;top:502.5px;color:#ff0a8c;font-size:12px;">-918 mV</div>
<div class="t" style="right:1215px;top:539.5px;color:#ff0a8c;font-size:12px;">-3.67 V</div>
<div class="t" style="right:1215px;top:575.5px;color:#ff0a8c;font-size:12px;">-6.42 V</div>
<div class="t" style="right:1215px;top:612.5px;color:#ff0a8c;font-size:12px;">-9.17 V</div>
<div class="t" style="right:1215px;top:642.0px;color:#ff0a8c;font-size:12px;">-11.92 V</div>
<div class="t" style="left:70px;top:333px;color:#ff0a8c;font-size:12px;">-237 ms</div>
<div class="t" style="left:90px;width:200px;text-align:center;top:333px;color:#ff0a8c;font-size:12px;">-187 ms</div>
<div class="t" style="left:210px;width:200px;text-align:center;top:333px;color:#ff0a8c;font-size:12px;">-137 ms</div>
<div class="t" style="left:330px;width:200px;text-align:center;top:333px;color:#ff0a8c;font-size:12px;">-87 ms</div>
<div class="t" style="left:450px;width:200px;text-align:center;top:333px;color:#ff0a8c;font-size:12px;">-37 ms</div>
<div class="t" style="left:570px;width:200px;text-align:center;top:333px;color:#ff0a8c;font-size:12px;">13 ms</div>
<div class="t" style="left:690px;width:200px;text-align:center;top:333px;color:#ff0a8c;font-size:12px;">63 ms</div>
<div class="t" style="left:810px;width:200px;text-align:center;top:333px;color:#ff0a8c;font-size:12px;">113 ms</div>
<div class="t" style="left:930px;width:200px;text-align:center;top:333px;color:#ff0a8c;font-size:12px;">163 ms</div>
<div class="t" style="left:1050px;width:200px;text-align:center;top:333px;color:#ff0a8c;font-size:12px;">213 ms</div>
<div class="t" style="right:10px;top:333px;color:#ff0a8c;font-size:12px;">263 ms</div>
<div class="t" style="left:70px;top:658px;color:#ff0a8c;font-size:12px;">133.961 ms</div>
<div class="t" style="left:210px;width:200px;text-align:center;top:658px;color:#ff0a8c;font-size:12px;">134.441 ms</div>
<div class="t" style="left:450px;width:200px;text-align:center;top:658px;color:#ff0a8c;font-size:12px;">134.921 ms</div>
<div class="t" style="left:690px;width:200px;text-align:center;top:658px;color:#ff0a8c;font-size:12px;">135.401 ms</div>
<div class="t" style="left:930px;width:200px;text-align:center;top:658px;color:#ff0a8c;font-size:12px;">135.881 ms</div>
<div class="t" style="right:10px;top:658px;color:#ff0a8c;font-size:12px;">136.361 ms</div>
<svg style="position:absolute;left:63px;top:654px" width="9" height="10"><polyline points="6.5,1.5 1.5,5 6.5,8.5" fill="none" stroke="#ff0a8c" stroke-width="1.3"/><line x1="1.5" y1="5" x2="8.5" y2="5" stroke="#ff0a8c" stroke-width="1.3"/></svg>
<div class="box" style="left:4px;top:687px;width:97px;height:94px;background:#404040"></div>
<div class="box" style="left:4px;top:687px;width:97px;height:95px;">
<div class="hdr" style="background:#ffff00;"><span class="hl">C1</span>
<span class="badge" style="left:50px;width:10.5px;color:#ffff00">F</span>
<span class="badge" style="left:62.0px;width:11.5px;color:#ffff00">B</span>
<span class="badge" style="left:75.0px;width:19px;color:#ffff00">D1</span>
</div>
<div class="br" style="top:18px">2.00 V/div</div>
<div class="br" style="top:33px">-4.05000 V</div>
<svg style="position:absolute;left:4px;top:50px" width="8" height="13"><rect x="2" y="1" width="1" height="11" fill="#c8c8a0"/><polyline points="0,8.5 2.5,11 5,8.5" fill="none" stroke="#d8d8d8" stroke-width="0.9"/></svg>
<div class="br" style="top:48px">1.03575 V</div>
<svg style="position:absolute;left:4px;top:65px" width="8" height="13"><rect x="2" y="1" width="1" height="11" fill="#c8c8a0"/><polyline points="0,4 2.5,1.5 5,4" fill="none" stroke="#d8d8d8" stroke-width="0.9"/></svg>
<div class="br" style="top:63px">2.42575 V</div>
<div class="bl" style="top:78px">&#916;y</div>
<div class="br" style="top:78px">1.39000 V</div>
</div>
<div class="box" style="left:104px;top:687px;width:97px;height:94px;background:#404040"></div>
<div class="box" style="left:104px;top:687px;width:97px;height:95px;">
<div class="hdr" style="background:#ff0a8c;"><span class="hl">C2</span>
<span class="badge" style="left:50px;width:10.5px;color:#ff0a8c">F</span>
<span class="badge" style="left:62.0px;width:11.5px;color:#ff0a8c">B</span>
<span class="badge" style="left:75.0px;width:19px;color:#ff0a8c">D1</span>
</div>
<div class="br" style="top:18px">5.00 V/div</div>
<div class="br" style="top:33px">0.0 mV ofst</div>
<svg style="position:absolute;left:4px;top:50px" width="8" height="13"><rect x="2" y="1" width="1" height="11" fill="#c8c8a0"/><polyline points="0,8.5 2.5,11 5,8.5" fill="none" stroke="#d8d8d8" stroke-width="0.9"/></svg>
<div class="br" style="top:48px">2.3838 V</div>
<svg style="position:absolute;left:4px;top:65px" width="8" height="13"><rect x="2" y="1" width="1" height="11" fill="#c8c8a0"/><polyline points="0,4 2.5,1.5 5,4" fill="none" stroke="#d8d8d8" stroke-width="0.9"/></svg>
<div class="br" style="top:63px">-66.9 mV</div>
<div class="bl" style="top:78px">&#916;y</div>
<div class="br" style="top:78px">-2.4506 V</div>
</div>
<div class="box" style="left:204px;top:687px;width:97px;height:94px;background:#404040"></div>
<div class="box" style="left:204px;top:687px;width:97px;height:95px;">
<div class="hdr" style="background:#ffff00;"><span class="hl">Z1</span>
<span class="hr">zoom(C1)</span>
</div>
<div class="br" style="top:18px">1.10 V/div</div>
<div class="br" style="top:33px">240 &#181;s/div</div>
<svg style="position:absolute;left:4px;top:50px" width="8" height="13"><rect x="2" y="1" width="1" height="11" fill="#c8c8a0"/><polyline points="0,8.5 2.5,11 5,8.5" fill="none" stroke="#d8d8d8" stroke-width="0.9"/></svg>
<div class="br" style="top:48px">1.03575 V</div>
<svg style="position:absolute;left:4px;top:65px" width="8" height="13"><rect x="2" y="1" width="1" height="11" fill="#c8c8a0"/><polyline points="0,4 2.5,1.5 5,4" fill="none" stroke="#d8d8d8" stroke-width="0.9"/></svg>
<div class="br" style="top:63px">2.42575 V</div>
<div class="bl" style="top:78px">&#916;y</div>
<div class="br" style="top:78px">1.39000 V</div>
<div style="position:absolute;left:0;top:94px;width:98px;height:1px;background:#00e000"></div>
</div>
<div class="box" style="left:303px;top:686px;width:99px;height:95px;background:#1e90ff"></div>
<div class="box" style="left:305px;top:703px;width:95px;height:76px;background:#2c4b68"></div>
<div class="box" style="left:304px;top:687px;width:97px;height:95px;">
<div class="hdr" style="background:#ff0a8c;"><span class="hl">Z2</span>
<span class="hr">zoom(C2)</span>
</div>
<div class="br" style="top:18px">2.75 V/div</div>
<div class="br" style="top:33px">240 &#181;s/div</div>
<svg style="position:absolute;left:4px;top:50px" width="8" height="13"><rect x="2" y="1" width="1" height="11" fill="#c8c8a0"/><polyline points="0,8.5 2.5,11 5,8.5" fill="none" stroke="#d8d8d8" stroke-width="0.9"/></svg>
<div class="br" style="top:48px">2.3838 V</div>
<svg style="position:absolute;left:4px;top:65px" width="8" height="13"><rect x="2" y="1" width="1" height="11" fill="#c8c8a0"/><polyline points="0,4 2.5,1.5 5,4" fill="none" stroke="#d8d8d8" stroke-width="0.9"/></svg>
<div class="br" style="top:63px">-66.9 mV</div>
<div class="bl" style="top:78px">&#916;y</div>
<div class="br" style="top:78px">-2.4506 V</div>
<div style="position:absolute;left:0;top:94px;width:98px;height:1px;background:#00e000"></div>
</div>
<svg style="position:absolute;left:404px;top:687px" width="97" height="94" shape-rendering="crispEdges"><rect x="0.5" y="0.5" width="96" height="93" fill="none" stroke="#3a3a3a" stroke-width="1"/><rect x="0.5" y="0.5" width="96" height="93" fill="none" stroke="#f0f0f0" stroke-width="1" stroke-dasharray="3 3"/><rect x="40" y="46" width="14" height="2" fill="#fff"/><rect x="46" y="40" width="2" height="14" fill="#fff"/></svg>
<div class="box" style="left:1003px;top:687px;width:57px;height:49px;background:#404040"><div style="position:absolute;left:1px;top:0;width:55px;height:15px;background:#00ff00"></div><div style="position:absolute;left:1px;top:1px;width:55px;height:15px;color:#000;font-weight:bold;font-size:13px;line-height:16px;text-align:center;transform:scaleY(1.11);transform-origin:0 12.5px">HD</div><div style="position:absolute;left:0;top:24px;width:57px;text-align:center;font-size:13px;line-height:15px;color:#f0f0f0;transform:scaleY(1.11);transform-origin:0 12px">12 Bits</div></div>
<div class="box" style="left:1063px;top:687px;width:112px;height:49px;background:#404040"><div style="position:absolute;left:1px;top:0;width:110px;height:15px;background:#f8f8f8"></div><div class="bl" style="top:1px;color:#000">Tbase</div><div class="br" style="top:1px;color:#000">-13 ms</div><div class="br" style="top:18px">50.0 ms/div</div><div class="bl" style="top:33px">2.5 MS</div><div class="br" style="top:33px">5 MS/s</div></div>
<div class="box" style="left:1178px;top:687px;width:97px;height:49px;background:#404040"><div style="position:absolute;left:1px;top:0;width:95px;height:15px;background:#f8f8f8"></div><div class="bl" style="top:1px;color:#000">Trigger</div><span class="badge" style="left:51px;width:19px;top:1px;color:#fff">C1</span><span class="badge" style="left:73px;width:21px;top:1px;color:#fff">DC</span><div class="bl" style="top:18px">Stop</div><div class="br" style="top:18px">2.42 V</div><div class="bl" style="top:33px">SlewRate</div><div class="br" style="top:33px">Pos</div></div>
<div class="t" style="left:1009px;top:737px;color:#f0f0f0;font-size:13px;transform:scaleY(1.11);transform-origin:0 12px;">X1=</div>
<div class="t" style="right:164px;top:737px;color:#f0f0f0;font-size:13px;transform:scaleY(1.11);transform-origin:0 12px;">135.0734 ms</div>
<div class="t" style="right:119px;top:737px;color:#f0f0f0;font-size:13px;transform:scaleY(1.11);transform-origin:0 12px;">&#916;X=</div>
<div class="t" style="right:53px;top:737px;color:#f0f0f0;font-size:13px;transform:scaleY(1.11);transform-origin:0 12px;">427.8 &#181;s</div>
<div class="t" style="left:1009px;top:753px;color:#f0f0f0;font-size:13px;transform:scaleY(1.11);transform-origin:0 12px;">X2=</div>
<div class="t" style="right:164px;top:753px;color:#f0f0f0;font-size:13px;transform:scaleY(1.11);transform-origin:0 12px;">135.5012 ms</div>
<div class="t" style="right:119px;top:753px;color:#f0f0f0;font-size:13px;transform:scaleY(1.11);transform-origin:0 12px;">1/&#916;X=</div>
<div class="t" style="right:52px;top:753px;color:#f0f0f0;font-size:13px;transform:scaleY(1.11);transform-origin:0 12px;">2.338 kHz</div>
<div id="footer"><div style="position:absolute;left:1128px;top:1px;width:135px;height:16px;background:#1c1c1c"></div><div style="position:absolute;left:1263px;top:1px;width:1px;height:16px;background:#000"></div><div id="logo"><span style="font-weight:bold;color:#f4f4f4;display:inline-block;transform:scaleX(0.774);transform-origin:left">TELEDYNE</span></div><div id="logo2">LECROY</div><div style="position:absolute;left:1129px;top:-1px;font-size:13px;line-height:17px;color:#f0f0f0">11/13/2023 5:37:15 AM</div></div>
</body></html>
